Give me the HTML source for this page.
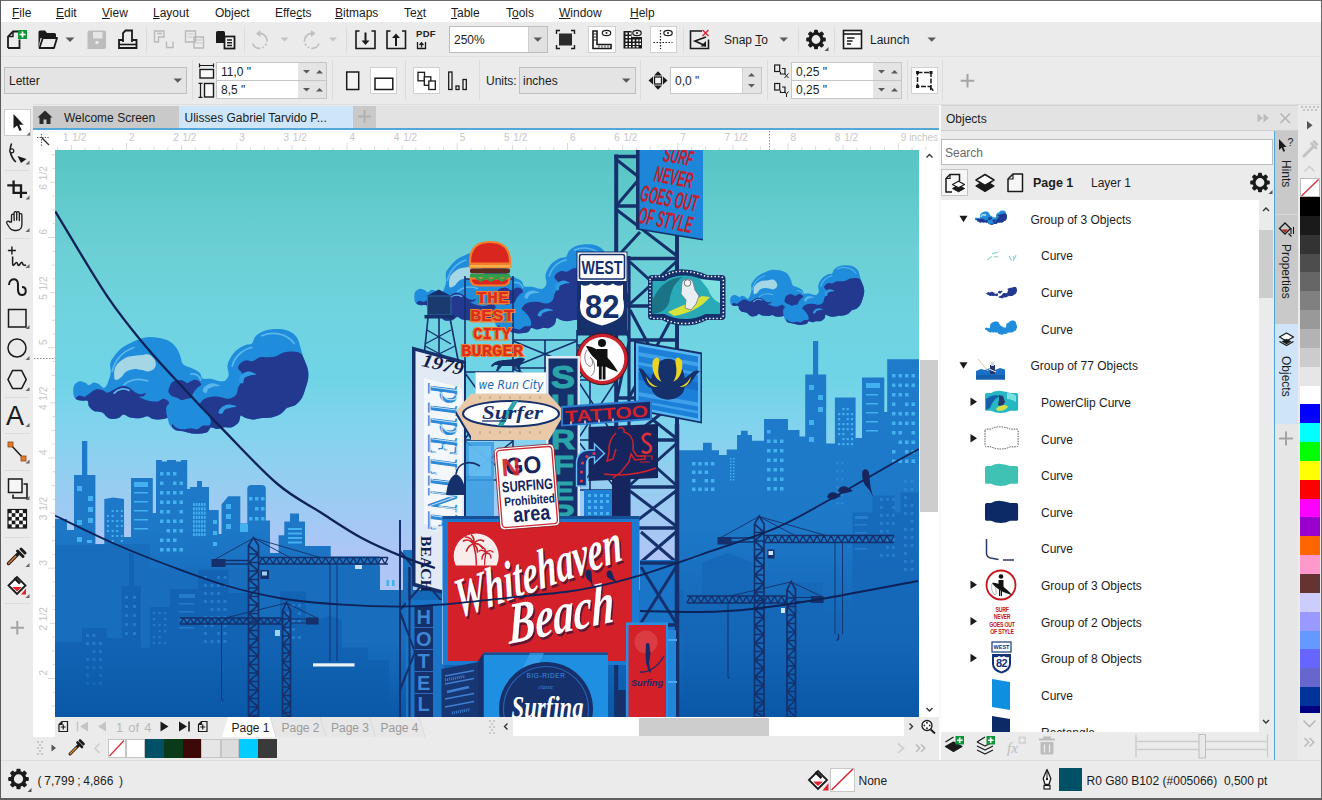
<!DOCTYPE html>
<html lang="en">
<head>
<meta charset="utf-8">
<title>CorelDRAW - Ulisses Gabriel Tarvido</title>
<style>
*{box-sizing:border-box;margin:0;padding:0}
html,body{width:1322px;height:800px;overflow:hidden;background:#ebebeb}
body{font-family:"Liberation Sans",sans-serif;font-size:13px;color:#1a1a1a;position:relative}
.a{position:absolute}
.t{position:absolute;white-space:nowrap;line-height:16px;font-size:12px;color:#1c1c1c}
.g{color:#a9a9a9}
u{text-decoration-thickness:1px;text-underline-offset:1px}
#menubar{left:1px;top:1px;width:1320px;height:21px;background:#fff}
#tb1{left:1px;top:22px;width:1320px;height:34px;background:#ebebeb}
#tb2{left:1px;top:56px;width:1320px;height:48px;background:#ebebeb}
#tabstrip{left:33px;top:106px;width:906px;height:22px;background:#e3e3e3}
#toolbox{left:1px;top:104px;width:32px;height:656px;background:#ebebeb}
.sep{position:absolute;width:1px;background:#dcdcdc}
.hsep{position:absolute;height:1px;background:#dcdcdc}
.inp{position:absolute;background:#fff;border:1px solid #c6c6c6}
.cmb{position:absolute;background:#e4e4e4;border:1px solid #c0c0c0}
.btnw{position:absolute;background:#fff;border:1px solid #d0d0d0}
svg{position:absolute;overflow:visible}
.row{position:absolute;left:0;width:316px;height:36px}
</style>
</head>
<body>
<!-- MENU BAR -->
<div id="menubar" class="a"></div>
<div class="t" style="left:12px;top:4.500px"><u>F</u>ile</div>
<div class="t" style="left:56px;top:4.500px"><u>E</u>dit</div>
<div class="t" style="left:102px;top:4.500px"><u>V</u>iew</div>
<div class="t" style="left:153px;top:4.500px"><u>L</u>ayout</div>
<div class="t" style="left:215px;top:4.500px">Ob<u>j</u>ect</div>
<div class="t" style="left:275px;top:4.500px">Effe<u>c</u>ts</div>
<div class="t" style="left:335px;top:4.500px"><u>B</u>itmaps</div>
<div class="t" style="left:404px;top:4.500px">Te<u>x</u>t</div>
<div class="t" style="left:451px;top:4.500px"><u>T</u>able</div>
<div class="t" style="left:506px;top:4.500px">T<u>o</u>ols</div>
<div class="t" style="left:559px;top:4.500px"><u>W</u>indow</div>
<div class="t" style="left:630px;top:4.500px"><u>H</u>elp</div>
<!-- TOOLBAR 1 -->
<div id="tb1" class="a"></div>
<div id="tb2" class="a"></div>
<div class="hsep" style="left:1px;top:56px;width:1320px;background:#e2e2e2"></div>
<div class="hsep" style="left:1px;top:104px;width:1320px;background:#dedede"></div>
<!-- TOOLBAR 1 widgets -->
<div class="sep" style="left:146px;top:27px;height:26px"></div>
<div class="sep" style="left:244px;top:27px;height:26px"></div>
<div class="sep" style="left:346px;top:27px;height:26px"></div>
<div class="sep" style="left:683px;top:27px;height:26px"></div>
<div class="sep" style="left:798px;top:27px;height:26px"></div>
<div class="sep" style="left:834px;top:27px;height:26px"></div>
<div class="inp" style="left:449px;top:26px;width:99px;height:27px;border-color:#bdbdbd"></div>
<div class="a" style="left:528px;top:27px;width:19px;height:25px;background:#e1e1e1;border-left:1px solid #cfcfcf"></div>
<div class="t" style="left:454px;top:32px">250%</div>
<div class="btnw" style="left:588px;top:26px;width:28px;height:27px"></div>
<div class="btnw" style="left:650px;top:26px;width:27px;height:27px"></div>
<div class="t" style="left:724px;top:32px">Snap <u>T</u>o</div>
<div class="t" style="left:870px;top:32px">Launch</div>
<div class="t" style="left:416px;top:28px;font-size:9.5px;font-weight:bold;line-height:12px;letter-spacing:0.3px;color:#222">PDF</div>
<svg class="a" style="left:0;top:0" width="1322" height="60" viewBox="0 0 1322 60">
 <!-- new doc -->
 <path d="M8 48V36.5l5-5h5.5M19.5 39.5V48H8" fill="none" stroke="#1a1a1a" stroke-width="1.8"/>
 <path d="M8.5 36.5h4.5v-4.5" fill="none" stroke="#1a1a1a" stroke-width="1.4"/>
 <rect x="18" y="30" width="9" height="9" fill="#0f9438"/>
 <path d="M22.5 31.5v6M19.5 34.5h6" stroke="#fff" stroke-width="1.7"/>
 <!-- open folder -->
 <path d="M38.5 48V32q0-1.5 1.5-1.5h5l2 2.5h7.500q1.500 0 1.500 1.500v3.500h-15.500z" fill="#1a1a1a"/>
 <path d="M39.5 48l3.300-10h14.200l-3 10z" fill="#ebebeb" stroke="#1a1a1a" stroke-width="1.8" stroke-linejoin="round"/>
 <path d="M65.500 37.500h9l-4.500 4.500z" fill="#5a5a5a"/>
 <!-- save (disabled) -->
 <path d="M87.500 32.500q0-2 2-2h14.500q2 0 2 2v14.500q0 2-2 2h-16.500z" fill="#bdbdbd"/>
 <rect x="93" y="32" width="9.500" height="6.500" fill="#e6e6e6"/>
 <rect x="95.500" y="41" width="3" height="3" fill="#ececec"/>
 <!-- print -->
 <path d="M123 42V33l2.500-2.500h6.500V42" fill="none" stroke="#1a1a1a" stroke-width="1.800"/>
 <path d="M123 40h-4v8h17.500v-8h-4" fill="none" stroke="#1a1a1a" stroke-width="1.800"/>
 <path d="M119 44.500h17.500" stroke="#1a1a1a" stroke-width="1.600"/>
 <!-- cut/copy disabled -->
 <path d="M154.500 31h9.500v6h-5.500v5h-4zM157 33.500h5" fill="none" stroke="#b9b9b9" stroke-width="1.400"/>
 <path d="M166.500 41.500v6h6.500v-6" fill="none" stroke="#b9b9b9" stroke-width="1.400"/>
 <path d="M185.500 31h10v11h-10zM194 37h9.500v11h-9.500z" fill="#ebebeb" stroke="#b9b9b9" stroke-width="1.400"/>
 <path d="M187.500 34h6M187.500 37h5M196 40h6M196 43h6" stroke="#c6c6c6" stroke-width="1.200"/>
 <!-- paste -->
 <path d="M216 32.500q0-1.500 1.500-1.500h6q1.500 0 1.500 1.500v10.500h-9z" fill="#1a1a1a"/>
 <rect x="224.500" y="36.500" width="10" height="12" fill="#f5f5f5" stroke="#1a1a1a" stroke-width="1.800"/>
 <path d="M227 40h5M227 42.800h5M227 45.600h5" stroke="#1a1a1a" stroke-width="1.500"/>
 <!-- undo / redo disabled -->
 <path d="M258 33.500a7.500 7.500 0 1 1 -5.500 10" fill="none" stroke="#bfbfbf" stroke-width="1.600" stroke-dasharray="14 2 2 2 2 2 20"/>
 <path d="M256 33.500l4.500-3.500v7z" fill="#bfbfbf"/>
 <path d="M280.500 37.500h8l-4 4z" fill="#c4c4c4"/>
 <path d="M313.500 33.500a7.500 7.500 0 1 0 5.500 10" fill="none" stroke="#bfbfbf" stroke-width="1.600" stroke-dasharray="14 2 2 2 2 2 20"/>
 <path d="M315.500 33.500l-4.500-3.500v7z" fill="#bfbfbf"/>
 <path d="M329 37.500h8l-4 4z" fill="#c4c4c4"/>
 <!-- import / export -->
 <path d="M359.500 31h-3.500v17.500h19v-17.500h-3.500" fill="none" stroke="#1a1a1a" stroke-width="1.600"/>
 <path d="M365.500 32.500v10" stroke="#1a1a1a" stroke-width="2"/><path d="M361.500 40.500h8l-4 4.500z" fill="#1a1a1a"/>
 <path d="M390.500 31h-3.500v17.500h18.500v-17.500h-3.500" fill="none" stroke="#1a1a1a" stroke-width="1.600"/>
 <path d="M396 46v-10" stroke="#1a1a1a" stroke-width="2"/><path d="M392 38h8l-4-4.500z" fill="#1a1a1a"/>
 <!-- pdf small icon -->
 <path d="M417.500 42v6.500h8v-6.500" fill="none" stroke="#1a1a1a" stroke-width="1.300"/><path d="M421.500 47.500v-4M419.500 45l2-2.200 2 2.200" fill="none" stroke="#1a1a1a" stroke-width="1.300"/>
 <!-- zoom arrow -->
 <path d="M533.500 37.500h8.500l-4.250 4.300z" fill="#5a5a5a"/>
 <!-- full screen -->
 <rect x="559" y="33.500" width="13" height="12" fill="#2b2b2b"/>
 <path d="M556.500 34v-3.500h3.500M571 30.500h3.500v3.500M574.500 45v3.500h-3.500M560 48.500h-3.500v-3.500" fill="none" stroke="#1a1a1a" stroke-width="1.400"/>
 <!-- rulers -->
 <path d="M593 31h4v13.500h14v4h-18z" fill="#fff" stroke="#1a1a1a" stroke-width="1.600"/>
 <path d="M594 34h2M594 37h2M594 40h2M599 47.500v-2M602 47.500v-2M605 47.500v-2M608 47.500v-2" stroke="#1a1a1a" stroke-width="1"/>
 <ellipse cx="606.500" cy="33" rx="4.200" ry="2.600" fill="#fff" stroke="#1a1a1a" stroke-width="1.200"/><circle cx="606.500" cy="33" r="1" fill="#1a1a1a"/>
 <!-- grid -->
 <path d="M623.500 31h8v6h10.500v11.500h-18.500z" fill="#1a1a1a"/>
 <g fill="#fff"><rect x="625.500" y="32.500" width="2" height="2"/><rect x="629" y="32.500" width="2" height="2"/><rect x="625.500" y="36" width="2" height="2"/><rect x="629" y="36" width="2" height="2"/>
 <rect x="625.500" y="39.500" width="2" height="2"/><rect x="629" y="39.500" width="2" height="2"/><rect x="632.700" y="39.500" width="2" height="2"/><rect x="636.400" y="39.500" width="2" height="2"/><rect x="639.500" y="39.500" width="1.500" height="2"/>
 <rect x="625.500" y="43" width="2" height="2"/><rect x="629" y="43" width="2" height="2"/><rect x="632.700" y="43" width="2" height="2"/><rect x="636.400" y="43" width="2" height="2"/><rect x="639.500" y="43" width="1.500" height="2"/>
 <rect x="625.500" y="46" width="2" height="1.500"/><rect x="629" y="46" width="2" height="1.500"/><rect x="632.700" y="46" width="2" height="1.500"/><rect x="636.400" y="46" width="2" height="1.500"/></g>
 <ellipse cx="637" cy="33" rx="4.200" ry="2.600" fill="#ebebeb" stroke="#1a1a1a" stroke-width="1.200"/><circle cx="637" cy="33" r="1" fill="#1a1a1a"/>
 <!-- guidelines -->
 <path d="M660.500 30v19M653.500 42.500h19" stroke="#1a1a1a" stroke-width="1.200" stroke-dasharray="1.500 1.500"/>
 <ellipse cx="668" cy="33" rx="4.200" ry="2.600" fill="#fff" stroke="#1a1a1a" stroke-width="1.200"/><circle cx="668" cy="33" r="1" fill="#1a1a1a"/>
 <!-- snap off -->
 <path d="M702 31h-11.500v17.500h18v-9" fill="none" stroke="#1a1a1a" stroke-width="1.600"/>
 <path d="M706 46l-11-5 11-4" fill="none" stroke="#1a1a1a" stroke-width="1.700"/><path d="M706 41v5.500h-5.500z" fill="#1a1a1a"/>
 <path d="M702.500 30l6 6M708.500 30l-6 6" stroke="#e0232e" stroke-width="1.400"/>
 <path d="M779.500 37.500h8.500l-4.250 4.300z" fill="#5a5a5a"/>
 <!-- gear -->
 <g transform="translate(816 39.500)"><circle r="6" fill="none" stroke="#1a1a1a" stroke-width="3.200"/>
 <g fill="#1a1a1a"><rect x="-2" y="-9.800" width="4" height="4" rx="1"/><rect x="-2" y="5.800" width="4" height="4" rx="1"/><rect x="-9.800" y="-2" width="4" height="4" rx="1"/><rect x="5.800" y="-2" width="4" height="4" rx="1"/>
 <g transform="rotate(45)"><rect x="-2" y="-9.800" width="4" height="4" rx="1"/><rect x="-2" y="5.800" width="4" height="4" rx="1"/><rect x="-9.800" y="-2" width="4" height="4" rx="1"/><rect x="5.800" y="-2" width="4" height="4" rx="1"/></g></g></g>
 <path d="M828.500 47v4h-4z" fill="#555"/>
 <!-- launch -->
 <rect x="843.500" y="30.500" width="18" height="18" fill="#fafafa" stroke="#1a1a1a" stroke-width="1.600"/>
 <path d="M843.500 34h18" stroke="#1a1a1a" stroke-width="1.600"/>
 <path d="M847 38h7.500M847 41h5.500M847 44h4" stroke="#1a1a1a" stroke-width="1.300"/>
 <path d="M927.500 37.500h8.500l-4.250 4.300z" fill="#5a5a5a"/>
</svg>
<!-- PROPERTY BAR widgets -->
<div class="sep" style="left:192px;top:60px;height:40px"></div>
<div class="sep" style="left:332px;top:60px;height:40px"></div>
<div class="sep" style="left:405px;top:60px;height:40px"></div>
<div class="sep" style="left:479px;top:60px;height:40px"></div>
<div class="sep" style="left:640px;top:60px;height:40px"></div>
<div class="sep" style="left:767px;top:60px;height:40px"></div>
<div class="sep" style="left:907px;top:60px;height:40px"></div>
<div class="sep" style="left:942px;top:60px;height:40px"></div>
<div class="cmb" style="left:4px;top:67px;width:183px;height:27px"></div>
<div class="t" style="left:9px;top:73px">Letter</div>
<div class="inp" style="left:216px;top:62px;width:111px;height:19px"></div>
<div class="inp" style="left:216px;top:80px;width:111px;height:19px"></div>
<div class="a" style="left:298px;top:63px;width:28px;height:17px;background:#e4e4e4"></div>
<div class="a" style="left:298px;top:81px;width:28px;height:17px;background:#e4e4e4"></div>
<div class="t" style="left:221px;top:64px">11,0 "</div>
<div class="t" style="left:221px;top:82px">8,5 "</div>
<div class="btnw" style="left:370px;top:67px;width:27px;height:27px"></div>
<div class="btnw" style="left:413px;top:67px;width:27px;height:27px"></div>
<div class="t" style="left:486px;top:73px">Units:</div>
<div class="cmb" style="left:519px;top:67px;width:117px;height:27px"></div>
<div class="t" style="left:523px;top:73px">inches</div>
<div class="inp" style="left:670px;top:67px;width:92px;height:27px"></div>
<div class="a" style="left:742px;top:68px;width:19px;height:25px;background:#e4e4e4;border-left:1px solid #d0d0d0"></div>
<div class="t" style="left:675px;top:73px">0,0 "</div>
<div class="inp" style="left:791px;top:62px;width:111px;height:19px"></div>
<div class="inp" style="left:791px;top:80px;width:111px;height:19px"></div>
<div class="a" style="left:873px;top:63px;width:28px;height:17px;background:#e4e4e4"></div>
<div class="a" style="left:873px;top:81px;width:28px;height:17px;background:#e4e4e4"></div>
<div class="t" style="left:796px;top:64px">0,25 "</div>
<div class="t" style="left:796px;top:82px">0,25 "</div>
<div class="btnw" style="left:911px;top:67px;width:27px;height:27px"></div>
<svg class="a" style="left:0;top:0" width="1322" height="110" viewBox="0 0 1322 110">
 <path d="M173.500 78.500h8.500l-4.250 4.300z" fill="#5a5a5a"/>
 <!-- width/height icons -->
 <path d="M199.500 65.500h14M199.500 63.500v4M213.500 63.500v4" stroke="#1a1a1a" stroke-width="1.200"/>
 <rect x="200" y="69.500" width="13.500" height="8.500" fill="#fafafa" stroke="#1a1a1a" stroke-width="1.400"/>
 <path d="M200.500 83v14.500M198.500 83.300h4M198.500 97.300h4" stroke="#1a1a1a" stroke-width="1.200"/>
 <rect x="204.500" y="83.500" width="9" height="13.500" fill="#fafafa" stroke="#1a1a1a" stroke-width="1.400"/>
 <g fill="#5a5a5a"><path d="M303 70h7l-3.500 3.500z"/><path d="M316 73.500h7l-3.500-3.500z"/><path d="M303 88h7l-3.500 3.500z"/><path d="M316 91.500h7l-3.500-3.500z"/>
 <path d="M878 70h7l-3.500 3.500z"/><path d="M891 73.500h7l-3.500-3.500z"/><path d="M878 88h7l-3.500 3.500z"/><path d="M891 91.500h7l-3.500-3.500z"/>
 <path d="M748 76.500h7l-3.500-3.500z"/><path d="M748 84h7l-3.500 3.500z"/></g>
 <!-- portrait / landscape -->
 <rect x="346.700" y="72" width="12" height="17.500" fill="#f4f4f4" stroke="#1a1a1a" stroke-width="1.500"/>
 <rect x="375" y="78.200" width="17.800" height="11.300" fill="#fff" stroke="#1a1a1a" stroke-width="1.500"/>
 <!-- all pages -->
 <rect x="418" y="72.300" width="6.500" height="8.500" fill="#fff" stroke="#1a1a1a" stroke-width="1.300"/>
 <rect x="424.300" y="76.800" width="6.500" height="8.500" fill="#fff" stroke="#1a1a1a" stroke-width="1.300"/>
 <rect x="428.800" y="81" width="6.500" height="8.500" fill="#fff" stroke="#1a1a1a" stroke-width="1.300"/>
 <rect x="448.700" y="72" width="3.300" height="17.500" fill="#f4f4f4" stroke="#1a1a1a" stroke-width="1.300"/>
 <rect x="456" y="86" width="3" height="3.500" fill="#f4f4f4" stroke="#1a1a1a" stroke-width="1.300"/>
 <rect x="463" y="79.500" width="3.300" height="10" fill="#f4f4f4" stroke="#1a1a1a" stroke-width="1.300"/>
 <path d="M622 78.500h8.500l-4.250 4.300z" fill="#5a5a5a"/>
 <!-- nudge icon -->
 <rect x="654.500" y="77" width="7" height="7" fill="#f4f4f4" stroke="#1a1a1a" stroke-width="1.300"/>
 <g fill="#1a1a1a"><path d="M654 75.500h8l-4-4.300z"/><path d="M654 85.500h8l-4 4.300z"/><path d="M653 76.500v8l-4.500-4z"/><path d="M663 76.500v8l4.500-4z"/></g>
 <!-- duplicate distance icons -->
 <g fill="none" stroke="#1a1a1a" stroke-width="1.200"><rect x="774.700" y="65" width="5" height="6.500"/><path d="M782 68.500h3v5.500h-4.500v-2"/>
 <rect x="774.700" y="83.500" width="5" height="6.500"/><path d="M782 87h3v5.500h-4.500v-2"/></g>
 <path d="M784.500 73.500l4 4.500M788.500 73.500l-4 4.500" stroke="#1a1a1a" stroke-width="1"/>
 <path d="M784.500 91.500l2 2.500 2-2.500M786.500 94v3" fill="none" stroke="#1a1a1a" stroke-width="1"/>
 <!-- bleed button -->
 <rect x="917.500" y="72.500" width="13.500" height="14" fill="none" stroke="#1a1a1a" stroke-width="1.500" stroke-dasharray="5 1.500"/>
 <g fill="#1a1a1a"><rect x="916" y="71" width="3" height="3"/><rect x="929.500" y="71" width="3" height="3"/><rect x="916" y="85" width="3" height="3"/><path d="M930 85l4 5.500-1.500 0.500-1-1.500-1.500 1z"/></g>
 <path d="M967.500 74v13.500M960.700 80.700h13.500" stroke="#a4a4a4" stroke-width="2"/>
</svg>
<!-- TAB STRIP -->
<div id="tabstrip" class="a"></div>
<div class="a" style="left:33px;top:106px;width:146px;height:22px;background:#c9c9c9"></div>
<div class="a" style="left:179px;top:106px;width:174px;height:22px;background:#cfe5f8"></div>
<div class="a" style="left:353px;top:106px;width:23px;height:22px;background:#c9c9c9"></div>
<div class="t" style="left:64px;top:110px">Welcome Screen</div>
<div class="t" style="left:184.500px;top:110px">Ulisses Gabriel Tarvido P...</div>
<div class="a" style="left:33px;top:128px;width:906px;height:2px;background:#55a7da"></div>
<!-- RULERS -->
<div class="a" style="left:33px;top:130px;width:906px;height:20px;background:#fff"></div>
<div class="a" style="left:33px;top:150px;width:22px;height:567px;background:#fff"></div>
<!-- TOOLBOX -->
<div id="toolbox" class="a"></div>
<div class="btnw" style="left:4px;top:109px;width:27px;height:27px;border-color:#cfcfcf"></div>
<div class="hsep" style="left:4px;top:170px;width:26px"></div>
<div class="hsep" style="left:4px;top:238px;width:26px"></div>
<div class="hsep" style="left:4px;top:397px;width:26px"></div>
<div class="hsep" style="left:4px;top:433px;width:26px"></div>
<div class="hsep" style="left:4px;top:470px;width:26px"></div>
<div class="hsep" style="left:4px;top:537px;width:26px"></div>
<div class="hsep" style="left:4px;top:603px;width:26px"></div>
<svg class="a" style="left:0;top:0" width="400" height="700" viewBox="0 0 400 700">
 <!-- home -->
 <path d="M37.500 117.500l7.500-7 7.500 7h-2v6.500h-4v-4.500h-3v4.500h-4v-6.500z" fill="#2a2a2a"/>
 <path d="M364.500 110v13M358 116.500h13" stroke="#b0b0b0" stroke-width="1.800"/>
 <!-- ruler origin -->
 <path d="M41.500 134v12M37 137.500h13" stroke="#555" stroke-width="1.200" stroke-dasharray="1.300 1.300"/>
 <path d="M42 138l7 7" stroke="#333" stroke-width="1.400"/>
 <!-- pick -->
 <path d="M13.500 114v14.500l3.500-3 2.500 5.500 2.200-1-2.500-5.300h4.300z" fill="#1a1a1a"/>
 <path d="M30 132v3.500h-3.500z" fill="#666"/>
 <!-- shape -->
 <path d="M11.600 143.500c-2 4.500-2 9.500 1 14.500q1.500 2.500 3.300 4" fill="none" stroke="#1a1a1a" stroke-width="1.600"/>
 <circle cx="11.800" cy="150.800" r="2" fill="#ebebeb" stroke="#1a1a1a" stroke-width="1.200"/>
 <path d="M17.500 156l9 3-5.500 4z" fill="#1a1a1a"/>
 <path d="M29.500 160.500v4h-4z" fill="#666"/>
 <!-- crop -->
 <path d="M13.600 180.500v12.300h13.400M7.300 185.400h13.700v12.600" fill="none" stroke="#1a1a1a" stroke-width="2.300"/>
 <path d="M29.500 195.500v4h-4z" fill="#666"/>
 <!-- pan hand -->
 <path d="M11.500 222v-6.500q0-1.300 1.300-1.300t1.300 1.300v5-7.500q0-1.300 1.300-1.300t1.300 1.300v7-7q0-1.300 1.300-1.300t1.300 1.300v7.500-5.500q0-1.300 1.300-1.300t1.300 1.300v9.500q0 6-6 6h-1.500q-3 0-5-3l-2.500-4q-.8-1.500.5-2.200t2.300.7z" fill="none" stroke="#1a1a1a" stroke-width="1.300" stroke-linejoin="round"/>
 <path d="M29.500 228v4h-4z" fill="#666"/>
 <!-- freehand -->
 <path d="M11.900 246.500v8M7.900 250.500h8" stroke="#1a1a1a" stroke-width="1.400"/>
 <path d="M12.600 256.500v7q0 3.500 2.200 .5t2.800 0 2.500 0 2.500-.5 3.500 1.500" fill="none" stroke="#1a1a1a" stroke-width="1.500"/>
 <path d="M29.500 264v4h-4z" fill="#666"/>
 <!-- artistic media -->
 <path d="M9 285c0-7 9-8 9-1 0 4-1 11 4 11s5-8 0-8" fill="none" stroke="#1a1a1a" stroke-width="2"/>
 <!-- rectangle -->
 <rect x="8.500" y="309.500" width="17.500" height="17.500" fill="none" stroke="#1a1a1a" stroke-width="1.500"/>
 <path d="M29.500 325v4h-4z" fill="#666"/>
 <!-- ellipse -->
 <circle cx="17" cy="348" r="9" fill="none" stroke="#1a1a1a" stroke-width="1.500"/>
 <path d="M29.500 356v4h-4z" fill="#666"/>
 <!-- polygon -->
 <path d="M8 379.500l4.600-9h9l4.600 9-4.600 9h-9z" fill="none" stroke="#1a1a1a" stroke-width="1.600"/>
 <path d="M29.500 387v4h-4z" fill="#666"/>
 <!-- dimension/connector -->
 <path d="M10.500 444.500l13 14" stroke="#1a1a1a" stroke-width="1.500"/>
 <rect x="8" y="442" width="5" height="5" fill="#e8782a" stroke="#8a4a18" stroke-width=".8"/>
 <rect x="21" y="456" width="5" height="5" fill="#e8782a" stroke="#8a4a18" stroke-width=".8"/>
 <path d="M29.500 459.500v4h-4z" fill="#666"/>
 <!-- drop shadow -->
 <path d="M13 494.500v3.500h14v-14h-3.500" fill="none" stroke="#1a1a1a" stroke-width="1.600"/>
 <rect x="8.500" y="479" width="13.500" height="13.500" fill="#f6f6f6" stroke="#1a1a1a" stroke-width="1.500"/>
 <path d="M29.500 496v4h-4z" fill="#666"/>
 <!-- transparency checker -->
 <rect x="8" y="509.500" width="18.500" height="18.500" fill="#fff" stroke="#1a1a1a" stroke-width="1.200"/>
 <g fill="#1a1a1a"><rect x="8" y="509.500" width="3.700" height="3.700"/><rect x="15.400" y="509.500" width="3.700" height="3.700"/><rect x="22.800" y="509.500" width="3.700" height="3.700"/>
 <rect x="11.700" y="513.200" width="3.700" height="3.700"/><rect x="19.100" y="513.200" width="3.700" height="3.700"/>
 <rect x="8" y="516.900" width="3.700" height="3.700"/><rect x="15.400" y="516.900" width="3.700" height="3.700"/><rect x="22.800" y="516.900" width="3.700" height="3.700"/>
 <rect x="11.700" y="520.600" width="3.700" height="3.700"/><rect x="19.100" y="520.600" width="3.700" height="3.700"/>
 <rect x="8" y="524.300" width="3.700" height="3.700"/><rect x="15.400" y="524.300" width="3.700" height="3.700"/><rect x="22.800" y="524.300" width="3.700" height="3.700"/></g>
 <!-- eyedropper -->
 <path d="M8.500 563.500l10-10" stroke="#1a1a1a" stroke-width="3.400" stroke-linecap="round"/>
 <path d="M8.700 563.300l7-7" stroke="#e8782a" stroke-width="1.600" stroke-linecap="round"/>
 <path d="M17.500 551l5.500 5.500M21 549l4 4" stroke="#1a1a1a" stroke-width="3" stroke-linecap="round"/>
 <path d="M29.500 563v4h-4z" fill="#666"/>
 <!-- fill -->
 <path d="M8.500 585.500l8.500-8.500 8.500 8.500-8.500 8.500z" fill="#fff" stroke="#1a1a1a" stroke-width="1.800"/>
 <path d="M12 587h10l-5 4.500z" fill="#e0232e"/>
 <path d="M14.500 578l5.500 5.500" stroke="#1a1a1a" stroke-width="2.500"/>
 <path d="M26 588.500v6h-5z" fill="#e0232e"/>
 <path d="M29.500 594v4h-4z" fill="#666"/>
 <path d="M17.300 621v13.500M10.500 627.700h13.500" stroke="#a4a4a4" stroke-width="2"/>
</svg>
<div class="t" style="left:6px;top:402px;font-size:27px;line-height:28px;letter-spacing:0">A</div>
<svg class="a" style="left:0;top:0" width="60" height="700" viewBox="0 0 60 700"><path d="M29.500 423v4h-4z" fill="#666"/></svg>
<!-- ARTWORK -->
<svg class="a" style="left:55px;top:150px;overflow:hidden" width="864" height="567" viewBox="55 150 864 567">
<defs>
<linearGradient id="sky" x1="0" y1="150" x2="0" y2="717" gradientUnits="userSpaceOnUse">
<stop offset="0" stop-color="#56c5c3"/><stop offset=".17" stop-color="#6bcfd4"/><stop offset=".30" stop-color="#70d3e0"/><stop offset=".40" stop-color="#6fd4e6"/><stop offset=".50" stop-color="#84d3ee"/><stop offset=".62" stop-color="#9ccbf2"/><stop offset=".72" stop-color="#afc5f6"/><stop offset="1" stop-color="#afc5f6"/>
</linearGradient>
<linearGradient id="city" x1="0" y1="340" x2="0" y2="717" gradientUnits="userSpaceOnUse">
<stop offset="0" stop-color="#1f7ccb"/><stop offset=".5" stop-color="#1d78c8"/><stop offset=".66" stop-color="#186dbd"/><stop offset=".84" stop-color="#1061b1"/><stop offset="1" stop-color="#0a58a8"/>
</linearGradient>
<g id="cloud"><g transform="scale(.19666) translate(-40 -50)"><path id="cl-outer" d="M42 370C41 358 42 340 48 330C54 320 66 314 75 312C84 310 97 317 105 320C113 323 115 332 122 332C129 332 137 319 145 318C153 317 164 322 172 326C180 330 188 345 195 345C202 345 209 338 215 325C221 312 230 288 232 270C234 252 227 234 230 220C233 206 241 198 250 185C259 172 272 156 285 145C298 134 313 126 330 118C347 110 368 100 385 95C402 90 414 86 430 86C446 86 463 88 480 92C497 96 516 100 530 108C544 116 556 128 565 140C574 152 579 166 585 180C591 194 590 214 600 225C610 236 631 238 645 245C659 252 676 259 685 268C694 277 690 293 700 298C710 303 730 298 745 300C760 302 778 311 790 312C802 313 808 313 815 308C822 303 830 292 832 280C834 268 825 249 826 235C827 221 833 208 840 195C847 182 858 166 870 155C882 144 902 134 915 128C928 122 941 128 950 120C959 112 959 93 970 82C981 71 998 61 1015 55C1032 49 1055 46 1075 46C1095 46 1118 48 1135 55C1152 62 1169 74 1180 90C1191 106 1194 132 1200 150C1206 168 1209 183 1215 200C1221 217 1232 233 1235 250C1238 267 1238 283 1236 300C1234 317 1227 334 1222 350C1217 366 1213 381 1205 395C1197 409 1184 423 1172 432C1160 441 1142 440 1130 447C1118 454 1111 469 1098 477C1085 485 1066 492 1050 496C1034 500 1016 497 1000 499C984 501 969 506 955 506C941 506 925 500 915 497C905 494 898 483 893 487C888 491 890 512 882 522C874 532 860 542 848 546C836 550 820 544 808 546C796 548 786 555 775 555C764 555 751 544 742 547C733 550 734 567 720 572C706 577 680 580 660 579C640 578 617 570 600 566C583 562 570 564 558 558C546 552 536 540 530 530C524 520 528 501 520 497C512 493 493 505 480 506C467 507 450 504 440 501C430 498 428 490 418 490C408 490 395 499 380 500C365 501 344 499 330 496C316 493 308 480 298 481C288 482 281 497 268 500C255 503 235 505 222 500C209 495 202 477 190 471C178 465 161 469 150 464C139 459 128 449 122 440C116 431 121 416 114 411C107 406 90 412 80 410C70 408 58 407 52 400C46 393 43 382 42 370Z" fill="#1f8ddb"/><g id="cl-dark"><path d="M55 400C54 396 64 386 72 384C80 382 91 392 100 390C109 388 119 378 128 372C137 366 145 357 155 354C165 351 180 353 190 356C200 359 207 370 216 370C225 370 233 362 242 358C251 354 259 348 268 344C277 340 286 336 295 336C304 336 314 339 322 342C330 345 335 351 342 356C349 361 356 368 364 372C372 376 380 378 388 378C396 378 410 370 412 372C414 374 404 385 398 388C392 391 374 388 378 392C382 396 405 406 420 410C435 414 457 416 470 414C483 412 491 400 500 400C509 400 519 407 524 412C529 417 531 425 530 432C529 439 522 448 520 455C518 462 516 468 516 475C516 482 526 492 520 497C514 502 493 505 480 506C467 507 450 504 440 501C430 498 428 490 418 490C408 490 395 499 380 500C365 501 344 499 330 496C316 493 308 480 298 481C288 482 281 497 268 500C255 503 235 505 222 500C209 495 202 477 190 471C178 465 161 469 150 464C139 459 128 449 122 440C116 431 121 416 114 411C107 406 90 412 80 410C70 408 56 404 55 400Z" fill="#23398f"/><path d="M530 345C533 337 536 323 546 316C556 309 577 304 590 305C603 306 612 320 622 320C632 320 642 307 652 305C662 303 673 306 680 310C687 314 693 324 692 330C691 336 679 339 672 346C665 353 657 364 652 372C647 380 649 390 640 396C631 402 612 410 600 410C588 410 580 400 570 396C560 392 549 390 542 385C535 380 528 373 526 366C524 359 527 353 530 345Z" fill="#23398f"/><path d="M880 245C879 237 885 227 892 220C899 213 912 207 922 205C932 203 940 212 952 210C964 208 977 193 992 190C1007 187 1027 191 1040 190C1053 189 1060 189 1072 185C1084 181 1097 169 1112 165C1127 161 1145 159 1160 160C1175 161 1190 163 1200 172C1210 181 1216 200 1222 215C1228 230 1234 246 1236 260C1238 274 1238 285 1236 300C1234 315 1227 334 1222 350C1217 366 1213 381 1205 395C1197 409 1184 423 1172 432C1160 441 1142 440 1130 447C1118 454 1111 469 1098 477C1085 485 1066 492 1050 496C1034 500 1016 497 1000 499C984 501 969 506 955 506C941 506 925 500 915 497C905 494 898 483 893 487C888 491 890 512 882 522C874 532 860 542 848 546C836 550 820 544 808 546C796 548 786 555 775 555C764 555 751 544 742 547C733 550 734 567 720 572C706 577 680 580 660 579C640 578 617 570 600 566C583 562 567 564 558 558C549 552 538 540 545 530C552 520 581 510 600 500C619 490 645 483 660 470C675 457 680 432 690 420C700 408 707 401 722 396C737 391 762 389 780 390C798 391 817 402 832 400C847 398 862 390 870 380C878 370 876 353 882 340C888 327 903 312 906 300C909 288 904 279 900 270C896 261 881 253 880 245Z" fill="#23398f"/></g><path d="M520 495C518 484 512 458 515 445C518 432 529 425 540 420C551 415 566 417 580 414C594 411 608 401 622 400C636 399 650 403 662 410C674 417 682 430 692 440C702 450 714 461 722 472C730 483 738 498 740 508C742 518 743 529 736 534C729 539 711 534 700 538C689 542 682 554 672 556C662 558 652 550 640 550C628 550 611 557 598 556C585 555 571 550 562 545C553 540 550 530 544 525C538 520 532 517 528 512C524 507 522 506 520 495Z" fill="#1f8ddb"/><path d="M250 290C250 278 248 251 258 235C268 219 288 201 308 192C328 183 360 183 380 180C400 177 413 172 425 175C437 178 446 188 452 196C458 204 462 217 462 226C462 235 457 244 450 250C443 256 430 261 420 262C410 263 402 257 390 255C378 253 363 249 350 250C337 251 322 256 312 262C302 268 296 280 290 286C284 292 280 297 274 300C268 303 260 306 256 304C252 302 250 302 250 290Z" fill="#a4d6e6"/><path d="M780 472C779 467 786 452 795 445C804 438 819 431 832 430C845 429 870 437 872 440C874 443 852 443 842 446C832 449 819 451 812 456C805 461 805 473 800 476C795 479 781 477 780 472Z" fill="#2f9be4"/><path d="M886 312C884 305 885 290 892 282C899 274 917 263 930 262C943 261 970 273 972 276C974 279 952 279 942 282C932 285 918 289 912 296C906 303 909 319 905 322C901 325 888 319 886 312Z" fill="#2f9be4"/><path d="M700 360C700 354 707 341 715 335C723 329 738 322 750 322C762 322 788 332 790 335C792 338 770 336 760 338C750 340 737 344 730 350C723 356 723 370 718 372C713 374 700 366 700 360Z" fill="#5ab6ec"/><path d="M240 262C250 210 290 160 350 140M300 330C330 300 380 295 420 310M850 235C860 190 900 150 950 140M1000 80C1060 55 1130 70 1165 120M640 275C665 270 685 285 690 305M250 372C270 350 300 345 325 358" fill="none" stroke="#5ab6ec" stroke-width="9" stroke-linecap="round"/></g>
</g></defs>
<rect x="55" y="150" width="864" height="567" fill="url(#sky)"/>
<use href="#cloud" transform="translate(72.900 329.800)"/>
<use href="#cloud" transform="translate(730 265.600) scale(.57)"/>
<use href="#cloud" transform="translate(414 245) scale(.85)"/>
<path d="M55 519h12v11h7V475h8V441h5.300V475h8.100V544h8.900V499l9-1.500 10.700 1.500V537h7V478h21.800V513h3.200V460h6v1.500h5V460h9v1.500h5V460h6.200V489h2.800V487h7V481h5V487h7V510h9.700V534h2.800V504.400L228.200 496.300H240.300V523.600H247.300V489q0-4 4-4h10.500q4 0 4 4V520.400H270V553H278.600V535.200H284.300V521.500H290V513.400H299V521.500H305V546H330.700V556.500H379.600V590.500H403V550H413V717H55Z" fill="url(#city)"/>
<path d="M919 359.300H887.200V412H884.300V377.500H862V437.900H855.600V397.600H834.900V443.600H826.200V374.600H818.200V341H813V374.600H805.200V436.400H799.500V430H788V419H764V440.700H752V435H747.700V430.700H741V435H737V449.400H726.700V455H719V450.200H711.800V442.700H703V450.200H676V717H919Z" fill="url(#city)"/>
<rect x="413" y="590" width="270" height="127" fill="#1468b8"/>
<g fill="#43b1ee"><rect x="77.0" y="486.0" width="5" height="5"/><rect x="88.0" y="496.0" width="5" height="5"/><rect x="88.0" y="507.0" width="5" height="5"/><rect x="88.0" y="518.0" width="5" height="5"/><rect x="77.0" y="520.0" width="5" height="5"/><rect x="77.0" y="537.0" width="5" height="5"/><rect x="111.6" y="510.0" width="2" height="2"/><rect x="116.2" y="510.0" width="2" height="2"/><rect x="120.8" y="510.0" width="2" height="2"/><rect x="107.0" y="515.0" width="2" height="2"/><rect x="111.6" y="515.0" width="2" height="2"/><rect x="120.8" y="515.0" width="2" height="2"/><rect x="107.0" y="520.0" width="2" height="2"/><rect x="111.6" y="520.0" width="2" height="2"/><rect x="116.2" y="520.0" width="2" height="2"/><rect x="120.8" y="520.0" width="2" height="2"/><rect x="107.0" y="525.0" width="2" height="2"/><rect x="116.2" y="525.0" width="2" height="2"/><rect x="120.8" y="525.0" width="2" height="2"/><rect x="107.0" y="530.0" width="2" height="2"/><rect x="111.6" y="530.0" width="2" height="2"/><rect x="116.2" y="530.0" width="2" height="2"/><rect x="111.6" y="535.0" width="2" height="2"/><rect x="116.2" y="535.0" width="2" height="2"/><rect x="120.8" y="535.0" width="2" height="2"/><rect x="107.0" y="540.0" width="2" height="2"/><rect x="111.6" y="540.0" width="2" height="2"/><rect x="120.8" y="540.0" width="2" height="2"/><rect x="134.0" y="482.0" width="14" height="5"/><rect x="134.0" y="492.0" width="14" height="1.5"/><rect x="134.0" y="501.0" width="14" height="1.5"/><rect x="134.0" y="510.0" width="14" height="1.5"/><rect x="134.0" y="519.0" width="14" height="1.5"/><rect x="134.0" y="528.0" width="14" height="1.5"/><rect x="160.0" y="472.0" width="3.5" height="3.5"/><rect x="166.5" y="472.0" width="3.5" height="3.5"/><rect x="173.0" y="472.0" width="3.5" height="3.5"/><rect x="160.0" y="481.5" width="3.5" height="3.5"/><rect x="173.0" y="481.5" width="3.5" height="3.5"/><rect x="179.5" y="481.5" width="3.5" height="3.5"/><rect x="160.0" y="491.0" width="3.5" height="3.5"/><rect x="166.5" y="491.0" width="3.5" height="3.5"/><rect x="173.0" y="491.0" width="3.5" height="3.5"/><rect x="179.5" y="491.0" width="3.5" height="3.5"/><rect x="160.0" y="500.5" width="3.5" height="3.5"/><rect x="166.5" y="500.5" width="3.5" height="3.5"/><rect x="173.0" y="500.5" width="3.5" height="3.5"/><rect x="179.5" y="500.5" width="3.5" height="3.5"/><rect x="160.0" y="510.0" width="3.5" height="3.5"/><rect x="166.5" y="510.0" width="3.5" height="3.5"/><rect x="179.5" y="510.0" width="3.5" height="3.5"/><rect x="160.0" y="519.5" width="3.5" height="3.5"/><rect x="166.5" y="519.5" width="3.5" height="3.5"/><rect x="173.0" y="519.5" width="3.5" height="3.5"/><rect x="179.5" y="519.5" width="3.5" height="3.5"/><rect x="166.5" y="529.0" width="3.5" height="3.5"/><rect x="173.0" y="529.0" width="3.5" height="3.5"/><rect x="179.5" y="529.0" width="3.5" height="3.5"/><rect x="160.0" y="538.5" width="3.5" height="3.5"/><rect x="166.5" y="538.5" width="3.5" height="3.5"/><rect x="173.0" y="538.5" width="3.5" height="3.5"/><rect x="160.0" y="548.0" width="3.5" height="3.5"/><rect x="166.5" y="548.0" width="3.5" height="3.5"/><rect x="173.0" y="548.0" width="3.5" height="3.5"/><rect x="179.5" y="548.0" width="3.5" height="3.5"/><rect x="193.0" y="503.0" width="1.8" height="3"/><rect x="195.7" y="503.0" width="1.8" height="3"/><rect x="198.4" y="503.0" width="1.8" height="3"/><rect x="201.1" y="503.0" width="1.8" height="3"/><rect x="203.8" y="503.0" width="1.8" height="3"/><rect x="193.0" y="507.3" width="1.8" height="3"/><rect x="195.7" y="507.3" width="1.8" height="3"/><rect x="198.4" y="507.3" width="1.8" height="3"/><rect x="201.1" y="507.3" width="1.8" height="3"/><rect x="203.8" y="507.3" width="1.8" height="3"/><rect x="193.0" y="511.6" width="1.8" height="3"/><rect x="195.7" y="511.6" width="1.8" height="3"/><rect x="198.4" y="511.6" width="1.8" height="3"/><rect x="201.1" y="511.6" width="1.8" height="3"/><rect x="203.8" y="511.6" width="1.8" height="3"/><rect x="193.0" y="515.9" width="1.8" height="3"/><rect x="195.7" y="515.9" width="1.8" height="3"/><rect x="198.4" y="515.9" width="1.8" height="3"/><rect x="201.1" y="515.9" width="1.8" height="3"/><rect x="203.8" y="515.9" width="1.8" height="3"/><rect x="193.0" y="520.2" width="1.8" height="3"/><rect x="195.7" y="520.2" width="1.8" height="3"/><rect x="198.4" y="520.2" width="1.8" height="3"/><rect x="201.1" y="520.2" width="1.8" height="3"/><rect x="203.8" y="520.2" width="1.8" height="3"/><rect x="193.0" y="524.5" width="1.8" height="3"/><rect x="195.7" y="524.5" width="1.8" height="3"/><rect x="198.4" y="524.5" width="1.8" height="3"/><rect x="201.1" y="524.5" width="1.8" height="3"/><rect x="203.8" y="524.5" width="1.8" height="3"/><rect x="193.0" y="528.8" width="1.8" height="3"/><rect x="195.7" y="528.8" width="1.8" height="3"/><rect x="198.4" y="528.8" width="1.8" height="3"/><rect x="201.1" y="528.8" width="1.8" height="3"/><rect x="203.8" y="528.8" width="1.8" height="3"/><rect x="193.0" y="533.1" width="1.8" height="3"/><rect x="195.7" y="533.1" width="1.8" height="3"/><rect x="198.4" y="533.1" width="1.8" height="3"/><rect x="201.1" y="533.1" width="1.8" height="3"/><rect x="203.8" y="533.1" width="1.8" height="3"/><rect x="213.0" y="520.0" width="4" height="4"/><rect x="213.0" y="531.0" width="4" height="4"/><rect x="213.0" y="542.0" width="4" height="4"/><rect x="226.0" y="504.0" width="5" height="5"/><rect x="226.0" y="514.0" width="5" height="5"/><rect x="226.0" y="524.0" width="5" height="5"/><rect x="240.0" y="524.0" width="8" height="8"/><rect x="249.0" y="497.0" width="3.5" height="3.5"/><rect x="255.0" y="497.0" width="3.5" height="3.5"/><rect x="261.0" y="497.0" width="3.5" height="3.5"/><rect x="255.0" y="507.0" width="3.5" height="3.5"/><rect x="261.0" y="507.0" width="3.5" height="3.5"/><rect x="249.0" y="517.0" width="3.5" height="3.5"/><rect x="255.0" y="517.0" width="3.5" height="3.5"/><rect x="261.0" y="517.0" width="3.5" height="3.5"/><rect x="288.0" y="528.0" width="14" height="2"/><rect x="288.0" y="532.5" width="14" height="2"/><rect x="288.0" y="537.0" width="14" height="2"/><rect x="288.0" y="541.5" width="14" height="2"/><rect x="87.0" y="540.0" width="5" height="3"/><rect x="809.0" y="385.0" width="5" height="5"/><rect x="818.0" y="395.0" width="5" height="5"/><rect x="809.0" y="420.0" width="5" height="5"/><rect x="809.0" y="437.0" width="5" height="5"/><rect x="818.0" y="407.0" width="5" height="5"/><rect x="842.3" y="408.0" width="2.2" height="2.2"/><rect x="846.6" y="408.0" width="2.2" height="2.2"/><rect x="838.0" y="413.0" width="2.2" height="2.2"/><rect x="842.3" y="413.0" width="2.2" height="2.2"/><rect x="846.6" y="413.0" width="2.2" height="2.2"/><rect x="850.9" y="413.0" width="2.2" height="2.2"/><rect x="838.0" y="418.0" width="2.2" height="2.2"/><rect x="846.6" y="418.0" width="2.2" height="2.2"/><rect x="850.9" y="418.0" width="2.2" height="2.2"/><rect x="838.0" y="423.0" width="2.2" height="2.2"/><rect x="842.3" y="423.0" width="2.2" height="2.2"/><rect x="846.6" y="423.0" width="2.2" height="2.2"/><rect x="850.9" y="423.0" width="2.2" height="2.2"/><rect x="838.0" y="428.0" width="2.2" height="2.2"/><rect x="842.3" y="428.0" width="2.2" height="2.2"/><rect x="846.6" y="428.0" width="2.2" height="2.2"/><rect x="850.9" y="428.0" width="2.2" height="2.2"/><rect x="838.0" y="433.0" width="2.2" height="2.2"/><rect x="842.3" y="433.0" width="2.2" height="2.2"/><rect x="850.9" y="433.0" width="2.2" height="2.2"/><rect x="842.3" y="438.0" width="2.2" height="2.2"/><rect x="846.6" y="438.0" width="2.2" height="2.2"/><rect x="850.9" y="438.0" width="2.2" height="2.2"/><rect x="838.0" y="443.0" width="2.2" height="2.2"/><rect x="842.3" y="443.0" width="2.2" height="2.2"/><rect x="846.6" y="443.0" width="2.2" height="2.2"/><rect x="850.9" y="443.0" width="2.2" height="2.2"/><rect x="866.0" y="383.0" width="14" height="5"/><rect x="866.0" y="394.0" width="12" height="1.5"/><rect x="866.0" y="403.0" width="12" height="1.5"/><rect x="866.0" y="412.0" width="12" height="1.5"/><rect x="866.0" y="421.0" width="12" height="1.5"/><rect x="866.0" y="430.0" width="12" height="1.5"/><rect x="892.0" y="374.0" width="3.5" height="3.5"/><rect x="898.5" y="374.0" width="3.5" height="3.5"/><rect x="905.0" y="374.0" width="3.5" height="3.5"/><rect x="911.5" y="374.0" width="3.5" height="3.5"/><rect x="892.0" y="383.5" width="3.5" height="3.5"/><rect x="898.5" y="383.5" width="3.5" height="3.5"/><rect x="905.0" y="383.5" width="3.5" height="3.5"/><rect x="911.5" y="383.5" width="3.5" height="3.5"/><rect x="892.0" y="393.0" width="3.5" height="3.5"/><rect x="898.5" y="393.0" width="3.5" height="3.5"/><rect x="905.0" y="393.0" width="3.5" height="3.5"/><rect x="892.0" y="402.5" width="3.5" height="3.5"/><rect x="905.0" y="402.5" width="3.5" height="3.5"/><rect x="911.5" y="402.5" width="3.5" height="3.5"/><rect x="892.0" y="412.0" width="3.5" height="3.5"/><rect x="898.5" y="412.0" width="3.5" height="3.5"/><rect x="905.0" y="412.0" width="3.5" height="3.5"/><rect x="911.5" y="412.0" width="3.5" height="3.5"/><rect x="892.0" y="421.5" width="3.5" height="3.5"/><rect x="898.5" y="421.5" width="3.5" height="3.5"/><rect x="905.0" y="421.5" width="3.5" height="3.5"/><rect x="911.5" y="421.5" width="3.5" height="3.5"/><rect x="892.0" y="431.0" width="3.5" height="3.5"/><rect x="898.5" y="431.0" width="3.5" height="3.5"/><rect x="911.5" y="431.0" width="3.5" height="3.5"/><rect x="898.5" y="440.5" width="3.5" height="3.5"/><rect x="905.0" y="440.5" width="3.5" height="3.5"/><rect x="911.5" y="440.5" width="3.5" height="3.5"/><rect x="892.0" y="450.0" width="3.5" height="3.5"/><rect x="905.0" y="450.0" width="3.5" height="3.5"/><rect x="911.5" y="450.0" width="3.5" height="3.5"/><rect x="892.0" y="459.5" width="3.5" height="3.5"/><rect x="898.5" y="459.5" width="3.5" height="3.5"/><rect x="905.0" y="459.5" width="3.5" height="3.5"/><rect x="911.5" y="459.5" width="3.5" height="3.5"/><rect x="767.0" y="430.0" width="3.5" height="3.5"/><rect x="767.0" y="439.5" width="3.5" height="3.5"/><rect x="773.5" y="439.5" width="3.5" height="3.5"/><rect x="780.0" y="439.5" width="3.5" height="3.5"/><rect x="767.0" y="449.0" width="3.5" height="3.5"/><rect x="773.5" y="449.0" width="3.5" height="3.5"/><rect x="780.0" y="449.0" width="3.5" height="3.5"/><rect x="767.0" y="458.5" width="3.5" height="3.5"/><rect x="773.5" y="458.5" width="3.5" height="3.5"/><rect x="780.0" y="458.5" width="3.5" height="3.5"/><rect x="767.0" y="468.0" width="3.5" height="3.5"/><rect x="773.5" y="468.0" width="3.5" height="3.5"/><rect x="780.0" y="468.0" width="3.5" height="3.5"/><rect x="767.0" y="477.5" width="3.5" height="3.5"/><rect x="773.5" y="477.5" width="3.5" height="3.5"/><rect x="780.0" y="477.5" width="3.5" height="3.5"/><rect x="767.0" y="487.0" width="3.5" height="3.5"/><rect x="773.5" y="487.0" width="3.5" height="3.5"/><rect x="780.0" y="487.0" width="3.5" height="3.5"/><rect x="692.0" y="462.0" width="3.5" height="3.5"/><rect x="698.3" y="462.0" width="3.5" height="3.5"/><rect x="704.6" y="462.0" width="3.5" height="3.5"/><rect x="710.9" y="462.0" width="3.5" height="3.5"/><rect x="692.0" y="470.5" width="3.5" height="3.5"/><rect x="698.3" y="470.5" width="3.5" height="3.5"/><rect x="704.6" y="470.5" width="3.5" height="3.5"/><rect x="692.0" y="479.0" width="3.5" height="3.5"/><rect x="704.6" y="479.0" width="3.5" height="3.5"/><rect x="710.9" y="479.0" width="3.5" height="3.5"/><rect x="692.0" y="487.5" width="3.5" height="3.5"/><rect x="698.3" y="487.5" width="3.5" height="3.5"/><rect x="704.6" y="487.5" width="3.5" height="3.5"/><rect x="710.9" y="487.5" width="3.5" height="3.5"/><rect x="730.0" y="458.0" width="1.5" height="1.5"/><rect x="733.0" y="458.0" width="1.5" height="1.5"/><rect x="730.0" y="461.0" width="1.5" height="1.5"/><rect x="733.0" y="461.0" width="1.5" height="1.5"/><rect x="730.0" y="464.0" width="1.5" height="1.5"/><rect x="733.0" y="464.0" width="1.5" height="1.5"/><rect x="730.0" y="467.0" width="1.5" height="1.5"/><rect x="733.0" y="467.0" width="1.5" height="1.5"/><rect x="730.0" y="470.0" width="1.5" height="1.5"/><rect x="733.0" y="470.0" width="1.5" height="1.5"/><rect x="730.0" y="473.0" width="1.5" height="1.5"/><rect x="733.0" y="473.0" width="1.5" height="1.5"/><rect x="730.0" y="476.0" width="1.5" height="1.5"/><rect x="733.0" y="476.0" width="1.5" height="1.5"/><rect x="730.0" y="479.0" width="1.5" height="1.5"/><rect x="733.0" y="479.0" width="1.5" height="1.5"/></g>
<path d="M55 545h50v-1h45v24h100v-6h10v4h120v24h33v127H55Z" fill="#186dbd"/>
<path d="M55 642h27v-14h24.700v10h15V586h7.300V553h5v33h7v62h9v-41h20v-18h5.700v-0h22.300v-19h30.300v23h19.700v24h32v-25.500h26v28.500h10l14-4 12 4v27.500h26v12.500h21v51H55Z" fill="#1263b3"/>
<path d="M683 600h19v-37.500l13-5 13-4.500 13 5 11.500 4.500v40h40v-20h30v30h30v-100h20v-17h22v17h6v-20h18v225H683Z" fill="#1567b7" opacity=".75"/>
<g fill="#3690e0" opacity=".55"><rect x="125.0" y="596.0" width="3" height="3"/><rect x="133.0" y="596.0" width="3" height="3"/><rect x="125.0" y="605.0" width="3" height="3"/><rect x="133.0" y="605.0" width="3" height="3"/><rect x="125.0" y="614.0" width="3" height="3"/><rect x="133.0" y="614.0" width="3" height="3"/><rect x="125.0" y="623.0" width="3" height="3"/><rect x="133.0" y="623.0" width="3" height="3"/><rect x="125.0" y="632.0" width="3" height="3"/><rect x="133.0" y="632.0" width="3" height="3"/><rect x="153.0" y="612.0" width="2.2" height="2.2"/><rect x="158.5" y="612.0" width="2.2" height="2.2"/><rect x="164.0" y="612.0" width="2.2" height="2.2"/><rect x="153.0" y="618.0" width="2.2" height="2.2"/><rect x="164.0" y="618.0" width="2.2" height="2.2"/><rect x="153.0" y="624.0" width="2.2" height="2.2"/><rect x="158.5" y="624.0" width="2.2" height="2.2"/><rect x="164.0" y="624.0" width="2.2" height="2.2"/><rect x="158.5" y="630.0" width="2.2" height="2.2"/><rect x="164.0" y="630.0" width="2.2" height="2.2"/><rect x="153.0" y="636.0" width="2.2" height="2.2"/><rect x="158.5" y="636.0" width="2.2" height="2.2"/><rect x="153.0" y="642.0" width="2.2" height="2.2"/><rect x="158.5" y="642.0" width="2.2" height="2.2"/><rect x="164.0" y="642.0" width="2.2" height="2.2"/><rect x="179.0" y="594.0" width="16" height="4"/><rect x="179.0" y="603.0" width="15" height="1.5"/><rect x="179.0" y="611.0" width="15" height="1.5"/><rect x="179.0" y="619.0" width="15" height="1.5"/><rect x="179.0" y="627.0" width="15" height="1.5"/><rect x="204.0" y="576.0" width="3" height="3"/><rect x="217.0" y="576.0" width="3" height="3"/><rect x="223.5" y="576.0" width="3" height="3"/><rect x="204.0" y="584.0" width="3" height="3"/><rect x="210.5" y="584.0" width="3" height="3"/><rect x="217.0" y="584.0" width="3" height="3"/><rect x="223.5" y="584.0" width="3" height="3"/><rect x="204.0" y="592.0" width="3" height="3"/><rect x="210.5" y="592.0" width="3" height="3"/><rect x="217.0" y="592.0" width="3" height="3"/><rect x="204.0" y="600.0" width="3" height="3"/><rect x="210.5" y="600.0" width="3" height="3"/><rect x="217.0" y="600.0" width="3" height="3"/><rect x="223.5" y="600.0" width="3" height="3"/><rect x="210.5" y="608.0" width="3" height="3"/><rect x="217.0" y="608.0" width="3" height="3"/><rect x="223.5" y="608.0" width="3" height="3"/><rect x="204.0" y="616.0" width="3" height="3"/><rect x="210.5" y="616.0" width="3" height="3"/><rect x="217.0" y="616.0" width="3" height="3"/><rect x="223.5" y="616.0" width="3" height="3"/><rect x="204.0" y="624.0" width="3" height="3"/><rect x="210.5" y="624.0" width="3" height="3"/><rect x="223.5" y="624.0" width="3" height="3"/><rect x="204.0" y="632.0" width="3" height="3"/><rect x="217.0" y="632.0" width="3" height="3"/><rect x="223.5" y="632.0" width="3" height="3"/><rect x="204.0" y="640.0" width="3" height="3"/><rect x="210.5" y="640.0" width="3" height="3"/><rect x="217.0" y="640.0" width="3" height="3"/><rect x="223.5" y="640.0" width="3" height="3"/><rect x="86.0" y="634.0" width="3" height="3"/><rect x="92.5" y="634.0" width="3" height="3"/><rect x="86.0" y="642.0" width="3" height="3"/><rect x="92.5" y="642.0" width="3" height="3"/><rect x="99.0" y="642.0" width="3" height="3"/><rect x="92.5" y="650.0" width="3" height="3"/><rect x="99.0" y="650.0" width="3" height="3"/><rect x="86.0" y="658.0" width="3" height="3"/><rect x="92.5" y="658.0" width="3" height="3"/><rect x="99.0" y="658.0" width="3" height="3"/><rect x="86.0" y="666.0" width="3" height="3"/><rect x="92.5" y="666.0" width="3" height="3"/><rect x="99.0" y="666.0" width="3" height="3"/><rect x="86.0" y="674.0" width="3" height="3"/><rect x="99.0" y="674.0" width="3" height="3"/><rect x="86.0" y="682.0" width="3" height="3"/><rect x="92.5" y="682.0" width="3" height="3"/><rect x="99.0" y="682.0" width="3" height="3"/><rect x="286.0" y="604.0" width="3" height="3"/><rect x="292.0" y="604.0" width="3" height="3"/><rect x="298.0" y="604.0" width="3" height="3"/><rect x="286.0" y="612.0" width="3" height="3"/><rect x="298.0" y="612.0" width="3" height="3"/><rect x="286.0" y="620.0" width="3" height="3"/><rect x="292.0" y="620.0" width="3" height="3"/><rect x="298.0" y="620.0" width="3" height="3"/><rect x="286.0" y="628.0" width="3" height="3"/><rect x="292.0" y="628.0" width="3" height="3"/><rect x="286.0" y="636.0" width="3" height="3"/><rect x="292.0" y="636.0" width="3" height="3"/><rect x="298.0" y="636.0" width="3" height="3"/><rect x="700.0" y="470.0" width="1" height="1"/><rect x="836.0" y="462.0" width="2.5" height="2.5"/><rect x="841.0" y="462.0" width="2.5" height="2.5"/><rect x="836.0" y="470.0" width="2.5" height="2.5"/><rect x="841.0" y="470.0" width="2.5" height="2.5"/><rect x="836.0" y="478.0" width="2.5" height="2.5"/><rect x="841.0" y="478.0" width="2.5" height="2.5"/><rect x="836.0" y="486.0" width="2.5" height="2.5"/><rect x="841.0" y="486.0" width="2.5" height="2.5"/><rect x="836.0" y="494.0" width="2.5" height="2.5"/><rect x="841.0" y="494.0" width="2.5" height="2.5"/><rect x="836.0" y="502.0" width="2.5" height="2.5"/><rect x="841.0" y="502.0" width="2.5" height="2.5"/><rect x="855.0" y="516.0" width="13" height="3"/><rect x="855.0" y="524.0" width="12" height="1.5"/><rect x="855.0" y="532.0" width="12" height="1.5"/><rect x="855.0" y="540.0" width="12" height="1.5"/><rect x="855.0" y="548.0" width="12" height="1.5"/><rect x="880.0" y="498.0" width="2.8" height="2.8"/><rect x="886.0" y="498.0" width="2.8" height="2.8"/><rect x="892.0" y="498.0" width="2.8" height="2.8"/><rect x="880.0" y="506.0" width="2.8" height="2.8"/><rect x="892.0" y="506.0" width="2.8" height="2.8"/><rect x="880.0" y="514.0" width="2.8" height="2.8"/><rect x="886.0" y="514.0" width="2.8" height="2.8"/><rect x="892.0" y="514.0" width="2.8" height="2.8"/><rect x="880.0" y="522.0" width="2.8" height="2.8"/><rect x="886.0" y="522.0" width="2.8" height="2.8"/><rect x="892.0" y="522.0" width="2.8" height="2.8"/><rect x="880.0" y="530.0" width="2.8" height="2.8"/><rect x="886.0" y="530.0" width="2.8" height="2.8"/><rect x="880.0" y="538.0" width="2.8" height="2.8"/><rect x="886.0" y="538.0" width="2.8" height="2.8"/><rect x="892.0" y="538.0" width="2.8" height="2.8"/><rect x="886.0" y="546.0" width="2.8" height="2.8"/><rect x="892.0" y="546.0" width="2.8" height="2.8"/><rect x="880.0" y="554.0" width="2.8" height="2.8"/><rect x="886.0" y="554.0" width="2.8" height="2.8"/><rect x="892.0" y="554.0" width="2.8" height="2.8"/><rect x="904.0" y="480.0" width="3" height="3"/><rect x="910.5" y="480.0" width="3" height="3"/><rect x="904.0" y="488.0" width="3" height="3"/><rect x="910.5" y="488.0" width="3" height="3"/><rect x="904.0" y="496.0" width="3" height="3"/><rect x="904.0" y="504.0" width="3" height="3"/><rect x="910.5" y="504.0" width="3" height="3"/><rect x="904.0" y="512.0" width="3" height="3"/><rect x="910.5" y="512.0" width="3" height="3"/><rect x="910.5" y="520.0" width="3" height="3"/><rect x="904.0" y="528.0" width="3" height="3"/><rect x="910.5" y="528.0" width="3" height="3"/><rect x="904.0" y="536.0" width="3" height="3"/><rect x="910.5" y="536.0" width="3" height="3"/><rect x="904.0" y="544.0" width="3" height="3"/><rect x="910.5" y="544.0" width="3" height="3"/><rect x="904.0" y="552.0" width="3" height="3"/><rect x="904.0" y="560.0" width="3" height="3"/><rect x="910.5" y="560.0" width="3" height="3"/><rect x="904.0" y="568.0" width="3" height="3"/><rect x="910.5" y="568.0" width="3" height="3"/></g>
<linearGradient id="btm" x1="0" y1="640" x2="0" y2="717" gradientUnits="userSpaceOnUse"><stop offset="0" stop-color="#0c5cac" stop-opacity="0"/><stop offset="1" stop-color="#0a57a7"/></linearGradient>
<rect x="55" y="640" width="864" height="77" fill="url(#btm)"/>
<rect x="355" y="565" width="7" height="4" fill="#c8dcf4"/><rect x="386.500" y="580" width="2.500" height="6" fill="#43b1ee"/><rect x="392" y="580" width="2.500" height="6" fill="#43b1ee"/>
<g id="cranes"><path d="M248.5 717V545.5L253.5 537.5L258.5 545.5V717M248.5 545.5L258.5 554.0M248.5 554.0H258.5M258.5 554.0L248.5 562.5M248.5 562.5H258.5M248.5 562.5L258.5 571.0M248.5 571.0H258.5M258.5 571.0L248.5 579.5M248.5 579.5H258.5M248.5 579.5L258.5 588.0M248.5 588.0H258.5M258.5 588.0L248.5 596.5M248.5 596.5H258.5M248.5 596.5L258.5 605.0M248.5 605.0H258.5M258.5 605.0L248.5 613.5M248.5 613.5H258.5M248.5 613.5L258.5 622.0M248.5 622.0H258.5M258.5 622.0L248.5 630.5M248.5 630.5H258.5M248.5 630.5L258.5 639.0M248.5 639.0H258.5M258.5 639.0L248.5 647.5M248.5 647.5H258.5M248.5 647.5L258.5 656.0M248.5 656.0H258.5M258.5 656.0L248.5 664.5M248.5 664.5H258.5M248.5 664.5L258.5 673.0M248.5 673.0H258.5M258.5 673.0L248.5 681.5M248.5 681.5H258.5M248.5 681.5L258.5 690.0M248.5 690.0H258.5M258.5 690.0L248.5 698.5M248.5 698.5H258.5M248.5 698.5L258.5 707.0M248.5 707.0H258.5M258.5 707.0L248.5 715.5M248.5 715.5H258.5M248.5 715.5L258.5 717M248.5 717H258.5" fill="none" stroke="#15306b" stroke-width="1.700"/><path d="M259 557.5H388M259 564H388M259.0 564L262.5 557.5M262.5 557.5L266.0 564M266.0 564L269.5 557.5M269.5 557.5L273.0 564M273.0 564L276.5 557.5M276.5 557.5L280.0 564M280.0 564L283.5 557.5M283.5 557.5L287.0 564M287.0 564L290.5 557.5M290.5 557.5L294.0 564M294.0 564L297.5 557.5M297.5 557.5L301.0 564M301.0 564L304.5 557.5M304.5 557.5L308.0 564M308.0 564L311.5 557.5M311.5 557.5L315.0 564M315.0 564L318.5 557.5M318.5 557.5L322.0 564M322.0 564L325.5 557.5M325.5 557.5L329.0 564M329.0 564L332.5 557.5M332.5 557.5L336.0 564M336.0 564L339.5 557.5M339.5 557.5L343.0 564M343.0 564L346.5 557.5M346.5 557.5L350.0 564M350.0 564L353.5 557.5M353.5 557.5L357.0 564M357.0 564L360.5 557.5M360.5 557.5L364.0 564M364.0 564L367.5 557.5M367.5 557.5L371.0 564M371.0 564L374.5 557.5M374.5 557.5L378.0 564M378.0 564L381.5 557.5M381.5 557.5L385.0 564M385.0 564L388.0 557.5" fill="none" stroke="#15306b" stroke-width="1.400"/><path d="M212 560.500h37M212 564h37" stroke="#15306b" stroke-width="1.300"/><rect x="211.500" y="559" width="14" height="8" fill="#15306b"/><path d="M253.500 538L320 557.500M253.500 538L290 557.500M253.500 538L214 560" stroke="#15306b" stroke-width=".9" fill="none"/><rect x="260.500" y="570" width="8.500" height="9" fill="#15306b"/><rect x="262" y="571.500" width="5" height="4" fill="#9fd0f0"/><path d="M330 564V661M337 564V661" stroke="#15306b" stroke-width=".9"/><rect x="313" y="663.300" width="41.500" height="3.200" fill="#eaf3fb"/><path d="M282.5 717V610.5L286.5 602.5L290.5 610.5V717M282.5 610.5L290.5 619.0M282.5 619.0H290.5M290.5 619.0L282.5 627.5M282.5 627.5H290.5M282.5 627.5L290.5 636.0M282.5 636.0H290.5M290.5 636.0L282.5 644.5M282.5 644.5H290.5M282.5 644.5L290.5 653.0M282.5 653.0H290.5M290.5 653.0L282.5 661.5M282.5 661.5H290.5M282.5 661.5L290.5 670.0M282.5 670.0H290.5M290.5 670.0L282.5 678.5M282.5 678.5H290.5M282.5 678.5L290.5 687.0M282.5 687.0H290.5M290.5 687.0L282.5 695.5M282.5 695.5H290.5M282.5 695.5L290.5 704.0M282.5 704.0H290.5M290.5 704.0L282.5 712.5M282.5 712.5H290.5M282.5 712.5L290.5 717M282.5 717H290.5" fill="none" stroke="#15306b" stroke-width="1.700"/><path d="M180 618H282M180 624H282M180.0 624L183.5 618M183.5 618L187.0 624M187.0 624L190.5 618M190.5 618L194.0 624M194.0 624L197.5 618M197.5 618L201.0 624M201.0 624L204.5 618M204.5 618L208.0 624M208.0 624L211.5 618M211.5 618L215.0 624M215.0 624L218.5 618M218.5 618L222.0 624M222.0 624L225.5 618M225.5 618L229.0 624M229.0 624L232.5 618M232.5 618L236.0 624M236.0 624L239.5 618M239.5 618L243.0 624M243.0 624L246.5 618M246.5 618L250.0 624M250.0 624L253.5 618M253.5 618L257.0 624M257.0 624L260.5 618M260.5 618L264.0 624M264.0 624L267.5 618M267.5 618L271.0 624M271.0 624L274.5 618M274.5 618L278.0 624M278.0 624L281.5 618M281.5 618L282.0 624" fill="none" stroke="#15306b" stroke-width="1.400"/><path d="M290.500 619h28M290.500 623h28" stroke="#15306b" stroke-width="1.200"/><rect x="306" y="617.500" width="12.500" height="7" fill="#15306b"/><path d="M286.500 603L225 618M286.500 603L318 618.500" stroke="#15306b" stroke-width=".9"/><path d="M221.500 624V699l1.500 2" stroke="#15306b" stroke-width="1" fill="none"/><rect x="275" y="630" width="5" height="6" fill="#9fd0f0"/><path d="M754.5 717V524L759.25 516L764 524V717M754.5 524L764 532.5M754.5 532.5H764M764 532.5L754.5 541.0M754.5 541.0H764M754.5 541.0L764 549.5M754.5 549.5H764M764 549.5L754.5 558.0M754.5 558.0H764M754.5 558.0L764 566.5M754.5 566.5H764M764 566.5L754.5 575.0M754.5 575.0H764M754.5 575.0L764 583.5M754.5 583.5H764M764 583.5L754.5 592.0M754.5 592.0H764M754.5 592.0L764 600.5M754.5 600.5H764M764 600.5L754.5 609.0M754.5 609.0H764M754.5 609.0L764 617.5M754.5 617.5H764M764 617.5L754.5 626.0M754.5 626.0H764M754.5 626.0L764 634.5M754.5 634.5H764M764 634.5L754.5 643.0M754.5 643.0H764M754.5 643.0L764 651.5M754.5 651.5H764M764 651.5L754.5 660.0M754.5 660.0H764M754.5 660.0L764 668.5M754.5 668.5H764M764 668.5L754.5 677.0M754.5 677.0H764M754.5 677.0L764 685.5M754.5 685.5H764M764 685.5L754.5 694.0M754.5 694.0H764M754.5 694.0L764 702.5M754.5 702.5H764M764 702.5L754.5 711.0M754.5 711.0H764M754.5 711.0L764 717M754.5 717H764" fill="none" stroke="#15306b" stroke-width="1.700"/><path d="M764.5 535.5H894M764.5 542.5H894M764.5 542.5L768.0 535.5M768.0 535.5L771.5 542.5M771.5 542.5L775.0 535.5M775.0 535.5L778.5 542.5M778.5 542.5L782.0 535.5M782.0 535.5L785.5 542.5M785.5 542.5L789.0 535.5M789.0 535.5L792.5 542.5M792.5 542.5L796.0 535.5M796.0 535.5L799.5 542.5M799.5 542.5L803.0 535.5M803.0 535.5L806.5 542.5M806.5 542.5L810.0 535.5M810.0 535.5L813.5 542.5M813.5 542.5L817.0 535.5M817.0 535.5L820.5 542.5M820.5 542.5L824.0 535.5M824.0 535.5L827.5 542.5M827.5 542.5L831.0 535.5M831.0 535.5L834.5 542.5M834.5 542.5L838.0 535.5M838.0 535.5L841.5 542.5M841.5 542.5L845.0 535.5M845.0 535.5L848.5 542.5M848.5 542.5L852.0 535.5M852.0 535.5L855.5 542.5M855.5 542.5L859.0 535.5M859.0 535.5L862.5 542.5M862.5 542.5L866.0 535.5M866.0 535.5L869.5 542.5M869.5 542.5L873.0 535.5M873.0 535.5L876.5 542.5M876.5 542.5L880.0 535.5M880.0 535.5L883.5 542.5M883.5 542.5L887.0 535.5M887.0 535.5L890.5 542.5M890.5 542.5L894.0 535.5" fill="none" stroke="#15306b" stroke-width="1.400"/><path d="M718 538h37M718 542h37" stroke="#15306b" stroke-width="1.300"/><rect x="717.500" y="537" width="14" height="7.500" fill="#15306b"/><path d="M759 516.500L826 535.500M759 516.500L795 535.500M759 516.500L720 538" stroke="#15306b" stroke-width=".9" fill="none"/><rect x="767.500" y="549.500" width="7" height="9" fill="#15306b"/><rect x="768.500" y="551" width="4.500" height="4" fill="#cfe6f8"/><path d="M835 542.500V634M842.500 542.500V634" stroke="#15306b" stroke-width=".9"/><path d="M838.500 634v5l-2 1.500" stroke="#15306b" stroke-width="1.300" fill="none"/><path d="M787 717V589.5L791.25 581.5L795.5 589.5V717M787 589.5L795.5 598.0M787 598.0H795.5M795.5 598.0L787 606.5M787 606.5H795.5M787 606.5L795.5 615.0M787 615.0H795.5M795.5 615.0L787 623.5M787 623.5H795.5M787 623.5L795.5 632.0M787 632.0H795.5M795.5 632.0L787 640.5M787 640.5H795.5M787 640.5L795.5 649.0M787 649.0H795.5M795.5 649.0L787 657.5M787 657.5H795.5M787 657.5L795.5 666.0M787 666.0H795.5M795.5 666.0L787 674.5M787 674.5H795.5M787 674.5L795.5 683.0M787 683.0H795.5M795.5 683.0L787 691.5M787 691.5H795.5M787 691.5L795.5 700.0M787 700.0H795.5M795.5 700.0L787 708.5M787 708.5H795.5M787 708.5L795.5 717.0M787 717.0H795.5" fill="none" stroke="#15306b" stroke-width="1.700"/><path d="M687 596H787M687 603H787M687.0 603L690.5 596M690.5 596L694.0 603M694.0 603L697.5 596M697.5 596L701.0 603M701.0 603L704.5 596M704.5 596L708.0 603M708.0 603L711.5 596M711.5 596L715.0 603M715.0 603L718.5 596M718.5 596L722.0 603M722.0 603L725.5 596M725.5 596L729.0 603M729.0 603L732.5 596M732.5 596L736.0 603M736.0 603L739.5 596M739.5 596L743.0 603M743.0 603L746.5 596M746.5 596L750.0 603M750.0 603L753.5 596M753.5 596L757.0 603M757.0 603L760.5 596M760.5 596L764.0 603M764.0 603L767.5 596M767.5 596L771.0 603M771.0 603L774.5 596M774.5 596L778.0 603M778.0 603L781.5 596M781.5 596L785.0 603M785.0 603L787.0 596" fill="none" stroke="#15306b" stroke-width="1.400"/><path d="M795.500 597.500h28M795.500 601.500h28" stroke="#15306b" stroke-width="1.200"/><rect x="811" y="596" width="12.500" height="7" fill="#15306b"/><path d="M791 582L730 596M791 582L823 597" stroke="#15306b" stroke-width=".9"/><path d="M728 603V677l1.500 2" stroke="#15306b" stroke-width="1" fill="none"/><rect x="781" y="608" width="4" height="5" fill="#cfe6f8"/></g>
<!-- tower: scaffolds -->
<g id="scaf" fill="none" stroke="#15306b" stroke-linecap="butt">
 <!-- main right scaffold -->
 <path d="M616.200 154.500V717M677 236V717" stroke-width="4"/>
 <path d="M629 256V560" stroke-width="3.200"/>
 <path d="M614.500 156.500H640M616 206H640M616 258.500H677M616 306H677M629 340H677M616 398H677M616 440H677M616 487H677M616 528H677M640 563H677M640 625H677" stroke-width="3.500"/>
 <path d="M617 160l23 18M617 205l23-27M617 210l60 46M640 232l-23 25M630 262l46 42M676 262l-46 42M617 262l12 42M630 310l46 86M676 310l-46 86M630 402l46 36M676 402l-46 36M630 444l46 41M676 444l-46 41M630 491l46 35M676 491l-46 35M641 532l35 30M676 532l-35 30M641 567l35 56M676 567l-35 56M618 310l11 28M617 398l12-56" stroke-width="3"/>
 <!-- mid scaffolds -->
 <path d="M465 276V520M513 276V520M577 330V520M590 330V520M545 340V400" stroke-width="1.600"/>
 <path d="M465 279H513M465 355H513M465 372H513M513 340H577M513 368H577M513 396H577M577 345H616M577 380H616M577 440H616M577 490H616M465 440H513M465 480H513" stroke-width="1.600"/>
 <path d="M513 341l64 26M577 341l-64 26M513 369l64 26M577 369l-64 26M465 373l48 66M513 373l-48 66M465 441l48 38M513 441l-48 38M578 346l38 33M616 346l-38 33M578 381l38 58M616 381l-38 58M578 441l38 48M616 441l-38 48" stroke-width="1.500"/>
 <!-- 1979 sign back scaffold + hotel scaffold -->
 <path d="M409.500 567V717M400 520V717" stroke-width="2"/>
 <path d="M400 551l44 53M400 610l44-50M400 612l15 40M400 690l15-38" stroke-width="2"/>
</g>
<!-- building behind skier sign -->
<rect x="584" y="490" width="46" height="40" fill="#1f7fd4"/>
<g fill="#4ab4f0"><rect x="588" y="494" width="3" height="3"/><rect x="594" y="494" width="3" height="3"/><rect x="600" y="494" width="3" height="3"/><rect x="606" y="494" width="3" height="3"/><rect x="588" y="500" width="3" height="3"/><rect x="594" y="500" width="3" height="3"/><rect x="600" y="500" width="3" height="3"/><rect x="606" y="500" width="3" height="3"/><rect x="588" y="506" width="3" height="3"/><rect x="594" y="506" width="3" height="3"/><rect x="600" y="506" width="3" height="3"/><rect x="588" y="512" width="3" height="3"/><rect x="594" y="512" width="3" height="3"/><rect x="600" y="512" width="3" height="3"/><rect x="606" y="512" width="3" height="3"/></g>
<!-- water tower -->
<g>
 <path d="M428 318l-5.500 52M450 318l9 47M439 318v50" stroke="#15306b" stroke-width="1.600" fill="none"/>
 <path d="M427 330l24 14M451 330l-26 14M425 346l30 16M455 346l-32 16" stroke="#15306b" stroke-width="1.200" fill="none"/>
 <path d="M438.700 289.500L451.500 296H426.500Z" fill="#15306b"/>
 <rect x="427.500" y="296" width="23.500" height="19" fill="#1b3a70" stroke="#2c6aa6" stroke-width="1"/>
 <rect x="424.500" y="315" width="30" height="3.500" fill="#15306b"/>
</g>
<!-- SURF NEVER sign -->
<g>
 <path d="M636 150H703V240.500L636 229.500Z" fill="#15306b"/>
 <path d="M639.500 150H703V239L639.500 228.500Z" fill="#1d86d8"/>
 <g font-family="Liberation Sans, sans-serif" font-weight="bold" font-style="italic" fill="#c2202c" transform="rotate(11 670 195)">
  <text x="656" y="163" font-size="22" textLength="30" lengthAdjust="spacingAndGlyphs">SURF</text>
  <text x="651" y="184.500" font-size="22.500" textLength="39" lengthAdjust="spacingAndGlyphs">NEVER</text>
  <text x="641" y="206.500" font-size="23.500" textLength="58" lengthAdjust="spacingAndGlyphs">GOES OUT</text>
  <text x="643" y="228.500" font-size="23.500" textLength="55" lengthAdjust="spacingAndGlyphs">OF STYLE</text>
 </g>
</g>
<!-- astronaut sign -->
<g>
 <path d="M648 279q0-4 4-4h10q10-6.500 23-5.500 12 .5 22 5.500h14.500q4 0 4 4v37q0 4-4 4h-14.500q-10 5.500-22 5.500-13 0-23-5.500h-10q-4 0-4-4z" fill="#16306c"/>
 <path d="M648 279q0-4 4-4h10q10-6.500 23-5.500 12 .5 22 5.500h14.500q4 0 4 4v37q0 4-4 4h-14.500q-10 5.500-22 5.500-13 0-23-5.500h-10q-4 0-4-4z" fill="none" stroke="#fff" stroke-width="1.600" stroke-dasharray="1.500 2.300" transform="translate(686 297.500) scale(.945 .93) translate(-686 -297.500)"/>
 <path d="M652.500 281h12q9-6 21-5.500 11 .5 20 5.500h14.500v33h-14.500q-9 5-20 5-12 0-21-5h-12z" fill="#2aa9b6"/>
 <path d="M652.500 300c6-14 16-22 30-23-8 6-12 14-13 24-2 8-8 12-17 13z" fill="#1a7486"/>
 <path d="M700 279l20 2v22c-6-2-10-8-12-14z" fill="#7fe0e0"/>
 <path d="M668 312c8-4 20-8 34-16l8 1c-8 10-22 17-36 19z" fill="#d8e23a"/>
 <path d="M682 282c3-4 9-4 11 0l2 8 4 6-3 8-5 6-6-2 1-8-5-6z" fill="#e8eef2" stroke="#6a7a8a" stroke-width=".8"/>
 <circle cx="687.500" cy="283" r="3.300" fill="#f4f6f8" stroke="#555" stroke-width=".8"/>
</g>
<!-- octopus sign -->
<g>
 <path d="M634 340.500L702 352.500V423.500L634 410.500Z" fill="#16306c"/>
 <path d="M636 343L700.500 354.200V421.500L636 409Z" fill="#58b8f2"/>
 <path d="M638.500 346L698 356.500V418.500L638.500 407Z" fill="#1d80d8"/>
 <path d="M638.500 352l59.500 10.500v4l-59.500-10.500zM638.500 362l59.500 10.500v3l-59.500-10.500zM638.500 392l59.500 10.500v4l-59.500-10.500zM638.500 400l59.500 11v2.500l-59.500-11z" fill="#4aa8ee" opacity=".8"/>
 <path d="M638.500 372l59.500 10.500v8l-59.500-10.500z" fill="#1666c2" opacity=".7"/>
 <g transform="translate(668 383) scale(1.28) translate(-668 -383)">
 <path d="M645 372c4-2 6 6 10 8 2-10 6-16 13-16s12 6 13 15c4-1 7-8 12-5-4 2-6 10-12 12 0 6-6 10-13 10s-12-4-13-9c-5-1-7-10-10-15z" fill="#16306c"/>
 <path d="M656 366c3-5 6-3 5 2-1 5-1 10 2 14-5-2-8-8-7-16zM679 366c-3-5-6-3-5 2 1 5 1 10-2 14 5-2 8-8 7-16zM651 378c2 4 5 7 9 8-4 1-8-2-9-8zM686 378c-2 4-5 7-9 8 4 1 8-2 9-8z" fill="#ecd522"/>
</g>
<!-- WEST 82 -->
<g>
 <rect x="577" y="252" width="50" height="29.500" fill="#fff" stroke="#16306c" stroke-width="1"/>
 <rect x="579.500" y="254.500" width="45" height="24.500" rx="2" fill="none" stroke="#16306c" stroke-width="1.600"/>
 <text x="581.500" y="273.700" font-family="Liberation Sans, sans-serif" font-weight="bold" font-size="17.600" fill="#16306c" textLength="41" lengthAdjust="spacingAndGlyphs">WEST</text>
 <rect x="577" y="281.500" width="50" height="54" fill="#16306c"/>
 <path d="M581 284.500q5 3 10-1 5.500 4 11 0 5.500 4 11 0 5 4 10 1v14q2 8 0 14-2 8-21 13-19-5-21-13-2-6 0-14z" fill="#fff"/>
 <text x="585" y="318" font-family="Liberation Sans, sans-serif" font-weight="bold" font-size="33" fill="#16306c" textLength="34.500" lengthAdjust="spacingAndGlyphs">82</text>
</g>
<!-- no surfing circle -->
<g>
 <circle cx="602.300" cy="359" r="26.300" fill="#3a1a2a"/>
 <circle cx="602.300" cy="359" r="25.300" fill="#cc222c"/>
 <circle cx="602.300" cy="359" r="22" fill="#fff"/>
 <circle cx="602" cy="343" r="4" fill="#111"/>
 <path d="M597 349h10.500v17.500h-2v13h-2.800v-13h-1v13h-2.800v-13h-1.900z" fill="#111"/>
 <path d="M586 346c8 0 22 8 32 26-12-4-26-12-32-26z" fill="#111"/>
 <path d="M587 350c-4 6-2 14 2 16s5-6 1-9c6 4 6 16 1 19" fill="none" stroke="#777" stroke-width=".9"/>
</g>
<!-- 1979 PIPE sign -->
<g>
 <path d="M412 346.500L466 361V600L412 586Z" fill="#15306b"/>
 <path d="M415.500 351L464 364V596L415.500 583Z" fill="#e2eaf5"/>
 <path d="M424 378L462 388V530L424 524Z" fill="#fff" opacity=".6"/>
 <text transform="translate(421 366) rotate(13)" font-family="Liberation Serif, serif" font-weight="bold" font-style="italic" font-size="19" fill="#101c4a" textLength="42" lengthAdjust="spacingAndGlyphs">1979</text>
 <text transform="translate(428 383) rotate(90)" font-family="Liberation Serif, serif" font-weight="bold" font-style="italic" font-size="44" fill="#2b8ad8" textLength="150" lengthAdjust="spacingAndGlyphs">PIPELINE</text>
 <text transform="translate(430 384.500) rotate(90)" font-family="Liberation Serif, serif" font-weight="bold" font-style="italic" font-size="44" fill="none" stroke="#f2f6fb" stroke-width="1.200" textLength="150" lengthAdjust="spacingAndGlyphs" opacity=".8">PIPELINE</text>
 <text transform="translate(420.500 536) rotate(90)" font-family="Liberation Serif, serif" font-weight="bold" font-size="14" fill="#101c4a" textLength="56" lengthAdjust="spacingAndGlyphs">BEACH</text>
</g>
<!-- SURFER vertical sign -->
<g>
 <rect x="546" y="356" width="34" height="168" fill="#dfeaf4"/>
 <rect x="548.500" y="358.500" width="29" height="163" fill="#15306b"/>
 <g font-family="Liberation Sans, sans-serif" font-weight="bold" fill="#2aa3ab" stroke="#2aa3ab" stroke-width="1" lengthAdjust="spacingAndGlyphs">
  <text x="551" y="388" font-size="31" textLength="24" lengthAdjust="spacingAndGlyphs">S</text><text x="551" y="417" font-size="31" textLength="24" lengthAdjust="spacingAndGlyphs">U</text><text x="551" y="449" font-size="27" textLength="24" lengthAdjust="spacingAndGlyphs">R</text><text x="552" y="474" font-size="25" textLength="22" lengthAdjust="spacingAndGlyphs">F</text><text x="552" y="500" font-size="25" textLength="22" lengthAdjust="spacingAndGlyphs">E</text><text x="551" y="523" font-size="25" textLength="24" lengthAdjust="spacingAndGlyphs">R</text>
 </g>
</g>
<!-- burger sign -->
<g>
 <path d="M470 262q0-20 20-20t20 20v1.500h-40z" fill="#d9271f" stroke="#f47f2a" stroke-width="2.200"/>
 <rect x="469" y="264.500" width="42" height="3.500" rx="1.700" fill="#f6b24a" stroke="#f47f2a" stroke-width="1"/>
 <rect x="470" y="268.500" width="40" height="5" rx="2" fill="#5b2a1e"/>
 <path d="M470 274h40v3l-4 3-5-3-5 3-6-3-5 3-5-3-5 3-5-3z" fill="#2f9e49"/>
 <path d="M470.500 278.500h39q0 7-8 7h-23q-8 0-8-7z" fill="#d9271f" stroke="#f47f2a" stroke-width="2"/>
 <path d="M476 277.500l5 3 5-3 5 3 6-3 5 3 5-3" fill="none" stroke="#2f9e49" stroke-width="2.500"/>
 <g font-family="Liberation Mono, monospace" font-weight="bold" fill="#dc2c20" stroke="#f47f2a" stroke-width="2.200" paint-order="stroke">
  <text x="476" y="302.500" font-size="17" textLength="33" lengthAdjust="spacingAndGlyphs">THE</text>
  <text x="470" y="320.500" font-size="17" textLength="44.500" lengthAdjust="spacingAndGlyphs">BEST</text>
  <text x="473" y="338.700" font-size="17" textLength="38" lengthAdjust="spacingAndGlyphs">CITY</text>
  <text x="461" y="356.200" font-size="17" textLength="62" lengthAdjust="spacingAndGlyphs">BURGER</text>
 </g>
 <path d="M478 304h29M472 322h41M475 340h35" stroke="#f47f2a" stroke-width="1.200"/>
 <!-- panther -->
 <path d="M491 366c2-4 8-6 14-6l10-1c4-1 7-2 10 0l-2 3c-2 1-3 3-3 6l1 3h-2l-3-5-8 0-6 0-4 5h-2l2-6-3 0-3 2z" fill="#15306b"/>
</g>
<!-- we Run City -->
<g>
 <rect x="475.700" y="372.500" width="70.500" height="21.500" fill="#fdfdfd" stroke="#c8d4e4" stroke-width=".6"/>
 <text x="478.500" y="388.500" font-family="DejaVu Sans, sans-serif" font-style="italic" font-size="12.500" fill="#1a68b6" textLength="65" lengthAdjust="spacingAndGlyphs">we Run City</text>
</g>
<!-- Surfer hex -->
<g>
 <path d="M456 411L471 393.700H548.700L565 412.500L549 440H471Z" fill="#e9c9a8"/>
 <path d="M456 411L471 436l0 4-15-25z" fill="#15306b"/>
 <path d="M480 396v3M490 396v3M500 396v3M510 396v3M520 396v3M530 396v3M540 396v3M480 431v3M490 431v3M500 431v3M510 431v3M520 431v3M530 431v3M540 431v3" stroke="#b89a7a" stroke-width="1"/>
 <ellipse cx="511" cy="413.700" rx="48" ry="12.800" fill="#fff" stroke="#15306b" stroke-width="2"/>
 <path d="M497 426l16-25 5 0-15 25z" fill="#2aa3ab"/>
 <text x="482" y="419" font-family="Liberation Serif, serif" font-style="italic" font-weight="bold" font-size="19" fill="#15306b" textLength="61" lengthAdjust="spacingAndGlyphs">Surfer</text>
 <path d="M482 421h24" stroke="#15306b" stroke-width="1.300"/>
</g>
<!-- TATTOO -->
<g>
 <path d="M561 406L652 399.500V420L561 426.500Z" fill="#2a7ad0"/>
 <path d="M563 408L650 401.800V418L563 424.500Z" fill="#1a2868"/>
 <text transform="translate(565.500 422.500) rotate(-4)" font-family="Liberation Sans, sans-serif" font-weight="bold" font-size="16.500" fill="#d2222c" textLength="83" lengthAdjust="spacingAndGlyphs">TATTOO</text>
 <path d="M571 421.500v3M585 420.500v3M599 419.500v3M613 418.500v3" stroke="#f4c8cc" stroke-width="1.600"/>
</g>
<!-- skier neon sign -->
<g>
 <path d="M588.500 427L658 424V478L588.500 481Z" fill="#16255e"/>
 <rect x="612" y="478" width="18" height="48" fill="#16255e"/>
 <path d="M618 429c3-3 7-1 6 3 8 2 10 10 9 18l4 6 8 0 0 3-10 1-4-6-2 8-8 10-8 6M616 433c-5 4-8 12-7 20l-2 8 6-2 3-10M604 474c16 2 36 0 52-6" fill="none" stroke="#d2222c" stroke-width="1.500"/>
 <path d="M651 435c-4-3-9 0-8 4s8 4 8 9-6 6-9 3" fill="none" stroke="#e0303a" stroke-width="2.600"/>
 <path d="M640 456h12v4M640 462h10" stroke="#d2222c" stroke-width="1.200" fill="none"/>
</g>
<!-- arrow sign -->
<g>
 <path d="M576.500 486V464q0-14 14-14h4v-6l10 9.500-10 9.500v-6h-2q-6 0-6 8v21z" fill="#1a2f7a" stroke="#6ec0f4" stroke-width="1.400"/>
 <g fill="#e23a44"><circle cx="581.500" cy="481" r="1.600"/><circle cx="581.500" cy="472" r="1.600"/><circle cx="582.500" cy="463" r="1.600"/><circle cx="587" cy="456.500" r="1.600"/><circle cx="594" cy="453.500" r="1.600"/></g>
</g>
<!-- light panels + lamp -->
<path d="M466 442h28v78h-28z" fill="#3a9be2" opacity=".85"/>
<path d="M469 446h22v30h-22z" fill="#6cc0f2" opacity=".8"/>
<g>
 <path d="M480 466c-10-6-22-4-24 8" fill="none" stroke="#15306b" stroke-width="1.600"/>
 <path d="M446 495q2-18 10-21 8 3 10 21z" fill="#15306b"/>
</g>
<!-- HOTEL + bottom signs -->
<g>
 <rect x="406" y="600" width="38" height="117" fill="#1a74c8"/>
 <path d="M409.500 567V717M400 612l15 40M400 690l15-38" stroke="#15306b" stroke-width="2" fill="none"/>
 <rect x="414.500" y="606" width="18.500" height="111" fill="#15306b"/>
 <g font-family="Liberation Sans, sans-serif" font-weight="bold" font-size="20" fill="#3d86d6" text-anchor="middle">
  <text x="423.700" y="624">H</text><text x="423.700" y="646">O</text><text x="423.700" y="668">T</text><text x="423.700" y="690">E</text><text x="423.700" y="711">L</text>
 </g>
 <path d="M414.500 627.500h18.500M414.500 649.500h18.500M414.500 671.500h18.500M414.500 693.500h18.500" stroke="#2a6ac0" stroke-width="1"/>
 <path d="M443 590V664" stroke="#e6eef8" stroke-width="2"/>
</g>
<!-- right-bottom scaffold bg -->
<rect x="640" y="560" width="37" height="157" fill="#1a74c8"/>
<g fill="none" stroke="#15306b"><path d="M640 563H677M640 625H677" stroke-width="3.500"/><path d="M641 567l35 56M676 567l-35 56" stroke-width="3"/><path d="M677 424V717" stroke-width="4.500"/></g>
<path d="M668 630h8v87h-8z" fill="#2385da"/>
<path d="M668 640h9M668 682h9" stroke="#4aa8ee" stroke-width="2"/>
<!-- Whitehaven billboard -->
<g>
 <rect x="442.500" y="516" width="197" height="149" fill="#1c7bd0"/>
 <path d="M442.500 516h197v3h-197z" fill="#15306b" opacity=".6"/>
 <rect x="448" y="522" width="184" height="139" fill="#d32029"/>
 <clipPath id="sunclip"><rect x="450" y="530" width="54" height="35.500"/></clipPath><circle cx="476.200" cy="556" r="22.500" fill="#f8ecec" clip-path="url(#sunclip)"/>
 <g stroke="#cc222c" fill="none" stroke-linecap="round"><path d="M476.500 565c0-7-1-14-3-21" stroke-width="1.600"/><path d="M484.500 565c0-4 .5-8 1.500-12" stroke-width="1.200"/>
 <path d="M473.500 544c-3-4-7-5-10-3M473.500 544c-1-4-4-7-8-7M473.500 544c1-4 0-7-2-9M473.500 544c3-4 7-5 10-3M473.500 544c4-1 7 1 9 4M473.500 544c-4 1-6 4-7 7M473.500 544c3 2 4 5 4 8" stroke-width="1.700"/>
 <path d="M486 553c-2-3-5-3-7-2M486 553c0-3-2-5-4-6M486 553c2-3 5-3 7-1M486 553c3 0 5 2 5 5M486 553c-3 1-4 3-4 6" stroke-width="1.400"/></g>
 <g font-family="Liberation Serif, serif" font-weight="bold" font-style="italic">
  <text transform="translate(459.500 621) rotate(-19.500) skewX(-10)" font-size="55" fill="#3a1438" textLength="176" lengthAdjust="spacingAndGlyphs" opacity=".75">Whitehaven</text>
  <text transform="translate(458 618.500) rotate(-19.500) skewX(-10)" font-size="55" fill="#fff" textLength="176" lengthAdjust="spacingAndGlyphs">Whitehaven</text>
  <text transform="translate(510.500 646.500) rotate(-12) skewX(-10)" font-size="58" fill="#3a1438" textLength="108" lengthAdjust="spacingAndGlyphs" opacity=".75">Beach</text>
  <text transform="translate(509 644) rotate(-12) skewX(-10)" font-size="58" fill="#fff" textLength="108" lengthAdjust="spacingAndGlyphs">Beach</text>
 </g>
</g>
<!-- NO SURFING sign -->
<g transform="rotate(-4.500 527 487)">
 <rect x="497" y="446" width="60" height="82" rx="4.500" fill="#fff" stroke="#8a1a22" stroke-width=".8"/>
 <rect x="499.300" y="448.300" width="55.400" height="77.400" rx="3.500" fill="none" stroke="#cc2a32" stroke-width="1.300"/>
 <g font-family="Liberation Sans, sans-serif" font-weight="bold" fill="#16255e">
  <text x="507" y="473.500" font-size="24" textLength="36" lengthAdjust="spacingAndGlyphs">GO</text>
  <text x="502" y="490.500" font-size="15" textLength="51" lengthAdjust="spacingAndGlyphs">SURFING</text>
  <text x="503" y="504.500" font-size="12.500" textLength="51" lengthAdjust="spacingAndGlyphs">Prohibited</text>
  <text x="511" y="521" font-size="21" textLength="37" lengthAdjust="spacingAndGlyphs">area</text>
 </g>
 <text x="503" y="474.500" font-family="Liberation Sans, sans-serif" font-weight="bold" font-size="25" fill="#cc222c" opacity=".9" textLength="19" lengthAdjust="spacingAndGlyphs">N</text>
</g>
<!-- grey-navy sign -->
<g>
 <path d="M441.500 669L477.300 662.300V717H441.500Z" fill="#173674"/>
 <g stroke="#3f7fd0" stroke-width="1.300" fill="none"><path d="M445 676l29-5.500M445 684l29-5.500M445 699l29-5.500M445 707l29-5.500"/><path d="M445 680l20-3.800" stroke-width="3" stroke-dasharray="1 1"/><path d="M447 692l22-5" stroke-width="2.500"/><path d="M452 713l18-3.500" stroke-width="3" stroke-dasharray="1 1"/></g>
</g>
<!-- BIG-RIDER -->
<g>
 <path d="M477.300 662.300L483.800 652.500V717H477.300Z" fill="#15306b"/>
 <rect x="483.800" y="652.500" width="124.200" height="64.500" fill="#1f8fe2"/>
 <path d="M483.800 652.500h124.200v2.500h-124.200z" fill="#15306b" opacity=".7"/>
 <path d="M500 717l30-64h14l-30 64z" fill="#45a8ee" opacity=".6"/>
 <circle cx="546" cy="709" r="47" fill="#15306b"/>
 <circle cx="546" cy="709" r="42.500" fill="none" stroke="#2a62b4" stroke-width="1.200"/>
 <text x="546" y="677.500" font-family="Liberation Sans, sans-serif" font-size="6.500" fill="#3f8fe0" text-anchor="middle" letter-spacing=".6">BIG-RIDER</text>
 <text x="546" y="689" font-family="Liberation Serif, serif" font-style="italic" font-size="5.500" fill="#3f8fe0" text-anchor="middle">classic</text>
 <text x="511.500" y="717.500" font-family="Liberation Serif, serif" font-weight="bold" font-style="italic" font-size="31" fill="#fff" textLength="72" lengthAdjust="spacingAndGlyphs">Surfing</text>
</g>
<rect x="616" y="690" width="9.500" height="27" fill="#15306b"/>
<!-- small Surfing sign -->
<g>
 <rect x="626" y="622.400" width="42" height="95" fill="#2a8fe2"/>
 <rect x="628.500" y="625" width="37.500" height="92" fill="#d32029"/>
 <circle cx="646" cy="642" r="11.500" fill="#e2525a" opacity=".55"/>
 <path d="M646 644c1.500-2 4-1 3.500 1.500l1 8-1.500 10 2 9h-1.800l-3-9-.7-9z" fill="#1a2a66"/>
 <path d="M640 672c8 1 18-5 24-16" fill="none" stroke="#1a2a66" stroke-width="1.300"/>
 <text x="631" y="686" font-family="Liberation Sans, sans-serif" font-weight="bold" font-style="italic" font-size="8.500" fill="#1a2a66" textLength="32" lengthAdjust="spacingAndGlyphs">Surfing</text>
</g>
<path d="M55.2 211.4C63.9 225.6 92.3 274.1 107.5 296.7C122.7 319.3 133.4 331.5 146.3 347.0C159.2 362.5 172.1 375.8 185.0 389.7C197.9 403.6 208.4 414.7 223.8 430.4C239.2 446.1 261.5 470.4 277.5 484.0C293.5 497.6 305.8 502.9 320.0 512.0C334.2 521.1 348.4 530.9 362.6 538.5C376.8 546.1 392.9 552.7 405.0 557.6C417.1 562.5 430.0 566.3 435.0 568.0" fill="none" stroke="#0e2258" stroke-width="2.300"/>
<path d="M640.0 611.0C650.0 611.2 681.3 612.3 700.0 612.0C718.7 611.7 730.8 611.3 752.0 609.0C773.2 606.7 799.3 602.7 827.0 598.0C854.7 593.3 902.8 583.8 918.0 581.0" fill="none" stroke="#0e2258" stroke-width="2"/>
<path d="M55.0 515.6C65.0 520.3 95.8 535.6 115.0 544.0C134.2 552.4 151.2 559.0 170.0 566.0C188.8 573.0 208.3 580.5 227.5 586.0C246.7 591.5 265.8 595.9 285.0 599.0C304.2 602.1 323.3 603.4 342.5 604.7C361.7 606.0 383.3 606.7 400.0 606.7C416.7 606.7 424.3 606.0 442.6 604.5C460.9 603.0 489.6 599.7 510.0 597.6C530.4 595.5 551.2 593.7 565.0 592.0C578.8 590.3 580.1 590.1 592.5 587.4C604.9 584.7 621.3 581.0 639.2 575.6C657.1 570.2 677.4 562.9 700.0 555.0C722.6 547.1 752.9 537.9 775.0 528.4C797.1 518.9 813.4 508.6 832.6 498.0C851.8 487.4 875.6 473.2 890.0 465.0C904.4 456.8 914.2 451.7 919.0 449.0" fill="none" stroke="#0e2258" stroke-width="1.800"/>
<g fill="#16255c"><path d="M827 497c1-4 5-6 9-4l5 3-6 3c-3 1-6 0-8-2z"/><path d="M838 491c1-4 5-6 9-4l6 4-7 2c-3 1-6 0-8-2z"/><path d="M862.500 471c2-3 6-2 6.500 2l1.500 14 2.500 10-3.500-7-4.500-5c-2.500-4-3.500-10-2.500-14z"/>
<path d="M586 571c1.500-2.500 5-2 5.500 1l0.500 8 1 8-2.500-6-3.500-3c-2-3-2-6-1-8z"/><path d="M607 572c2-2.500 5-1.500 5.500 1.500l1.500 5 4 5-5-3-4-2c-2.500-2-3-4.500-2-6.500z"/></g>
</svg>
<!-- RULER MARKS -->
<svg class="a" style="left:0;top:0" width="940" height="720" viewBox="0 0 940 720" font-family="Liberation Sans, sans-serif" font-size="10" fill="#c6c6c6">
<path d="M57.6 150v-2.5M71.4 150v-5M85.2 150v-2.5M98.9 150v-3.5M112.7 150v-2.5M126.5 150v-7M140.3 150v-2.5M154.1 150v-3.5M167.8 150v-2.5M181.6 150v-5M195.4 150v-2.5M209.2 150v-3.5M223.0 150v-2.5M236.8 150v-7M250.5 150v-2.5M264.3 150v-3.5M278.1 150v-2.5M291.9 150v-5M305.7 150v-2.5M319.4 150v-3.5M333.2 150v-2.5M347.0 150v-7M360.8 150v-2.5M374.6 150v-3.5M388.3 150v-2.5M402.1 150v-5M415.9 150v-2.5M429.7 150v-3.5M443.5 150v-2.5M457.2 150v-7M471.0 150v-2.5M484.8 150v-3.5M498.6 150v-2.5M512.4 150v-5M526.2 150v-2.5M539.9 150v-3.5M553.7 150v-2.5M567.5 150v-7M581.3 150v-2.5M595.1 150v-3.5M608.8 150v-2.5M622.6 150v-5M636.4 150v-2.5M650.2 150v-3.5M664.0 150v-2.5M677.8 150v-7M691.5 150v-2.5M705.3 150v-3.5M719.1 150v-2.5M732.9 150v-5M746.7 150v-2.5M760.4 150v-3.5M774.2 150v-2.5M788.0 150v-7M801.8 150v-2.5M815.6 150v-3.5M829.3 150v-2.5M843.1 150v-5M856.9 150v-2.5M870.7 150v-3.5M884.5 150v-2.5M898.2 150v-7M912.0 150v-2.5M925.8 150v-3.5" stroke="#d9d9d9" stroke-width="1"/>
<text x="129.0" y="141">2</text>
<text x="239.2" y="141">3</text>
<text x="349.5" y="141">4</text>
<text x="459.8" y="141">5</text>
<text x="570.0" y="141">6</text>
<text x="680.2" y="141">7</text>
<text x="790.5" y="141">8</text>
<text x="900.8" y="141">9 inches</text>
<text x="63.0" y="141" word-spacing="1">1 1/2</text>
<text x="173.2" y="141" word-spacing="1">2 1/2</text>
<text x="283.5" y="141" word-spacing="1">3 1/2</text>
<text x="393.8" y="141" word-spacing="1">4 1/2</text>
<text x="504.0" y="141" word-spacing="1">5 1/2</text>
<text x="614.2" y="141" word-spacing="1">6 1/2</text>
<text x="724.5" y="141" word-spacing="1">7 1/2</text>
<text x="834.8" y="141" word-spacing="1">8 1/2</text>
<path d="M55 154.8h-3.5M55 168.6h-2.5M55 182.4h-5M55 196.2h-2.5M55 209.9h-3.5M55 223.7h-2.5M55 237.5h-7M55 251.3h-2.5M55 265.1h-3.5M55 278.8h-2.5M55 292.6h-5M55 306.4h-2.5M55 320.2h-3.5M55 334.0h-2.5M55 347.8h-7M55 361.5h-2.5M55 375.3h-3.5M55 389.1h-2.5M55 402.9h-5M55 416.7h-2.5M55 430.4h-3.5M55 444.2h-2.5M55 458.0h-7M55 471.8h-2.5M55 485.6h-3.5M55 499.3h-2.5M55 513.1h-5M55 526.9h-2.5M55 540.7h-3.5M55 554.5h-2.5M55 568.2h-7M55 582.0h-2.5M55 595.8h-3.5M55 609.6h-2.5M55 623.4h-5M55 637.2h-2.5M55 650.9h-3.5M55 664.7h-2.5M55 678.5h-7M55 692.3h-2.5M55 706.1h-3.5" stroke="#d9d9d9" stroke-width="1"/>
<text transform="translate(46.500 234.6) rotate(-90)">6</text>
<text transform="translate(46.500 189.5) rotate(-90)" word-spacing="1">6 1/2</text>
<text transform="translate(46.500 344.9) rotate(-90)">5</text>
<text transform="translate(46.500 299.8) rotate(-90)" word-spacing="1">5 1/2</text>
<text transform="translate(46.500 455.1) rotate(-90)">4</text>
<text transform="translate(46.500 410.0) rotate(-90)" word-spacing="1">4 1/2</text>
<text transform="translate(46.500 565.4) rotate(-90)">3</text>
<text transform="translate(46.500 520.2) rotate(-90)" word-spacing="1">3 1/2</text>
<text transform="translate(46.500 675.6) rotate(-90)">2</text>
<text transform="translate(46.500 630.5) rotate(-90)" word-spacing="1">2 1/2</text>
<path d="M769.500 131v19" stroke="#8a8a8a" stroke-width="1" stroke-dasharray="1.500 1.500"/>
<path d="M34 358.500h21" stroke="#8a8a8a" stroke-width="1" stroke-dasharray="1.500 1.500"/>
</svg>
<!-- OBJECTS DOCKER -->
<div class="a" style="left:940px;top:105px;width:358px;height:656px;background:#ebebeb"></div>
<div class="a" style="left:940px;top:105px;width:358px;height:26px;background:#e3e3e3;border-top:1px solid #d2d2d2;border-bottom:1px solid #cfcfcf"></div>
<div class="t" style="left:946px;top:111px">Objects</div>
<div class="inp" style="left:941px;top:139px;width:332px;height:26px;border-color:#bcbcbc"></div>
<div class="t" style="left:945px;top:145px;color:#6a6a6a">Search</div>
<div class="btnw" style="left:941px;top:169px;width:27px;height:27px;background:#f7f7f7;border-color:#c4c4c4"></div>
<div class="t" style="left:1033px;top:175px;font-weight:bold;font-size:12.500px">Page 1</div>
<div class="t" style="left:1091px;top:175px">Layer 1</div>
<div class="a" id="tree" style="left:941px;top:200px;width:318px;height:532px;background:#fff;overflow:hidden"></div>
<div class="a" style="left:1259px;top:200px;width:14px;height:532px;background:#ebebeb"></div>
<div class="a" style="left:1259px;top:230px;width:14px;height:68px;background:#cdcdcd"></div>
<div class="t" style="left:1030.5px;top:211.7px">Group of 3 Objects</div>
<div class="t" style="left:1041px;top:248.3px">Curve</div>
<div class="t" style="left:1041px;top:285.0px">Curve</div>
<div class="t" style="left:1041px;top:321.6px">Curve</div>
<div class="t" style="left:1030.5px;top:358.2px">Group of 77 Objects</div>
<div class="t" style="left:1041px;top:394.9px">PowerClip Curve</div>
<div class="t" style="left:1041px;top:431.5px">Curve</div>
<div class="t" style="left:1041px;top:468.1px">Curve</div>
<div class="t" style="left:1041px;top:504.7px">Curve</div>
<div class="t" style="left:1041px;top:541.4px">Curve</div>
<div class="t" style="left:1041px;top:578.0px">Group of 3 Objects</div>
<div class="t" style="left:1041px;top:614.6px">Group of 2 Objects</div>
<div class="t" style="left:1041px;top:651.3px">Group of 8 Objects</div>
<div class="t" style="left:1041px;top:687.9px">Curve</div>
<div class="t" style="left:1041px;top:724.5px">Rectangle</div>
<svg class="a" style="left:0;top:0" width="1322" height="732" viewBox="0 0 1322 732"><defs><clipPath id="treeclip"><rect x="941" y="200" width="318" height="532"/></clipPath></defs><g clip-path="url(#treeclip)"><path d="M959.500 215.7h8l-4 6.500z" fill="#1a1a1a"/>
<use href="#cloud" transform="translate(975 210.500) scale(.136)"/>
<g transform="translate(985 247)" fill="none" stroke="#8fd6d2" stroke-width="1.100"><path d="M2 13c2-1 3-3 5-3.500M7 7c2-1 4-2 6-1.500M9 10c1.500-.5 3-.5 4 0M24 9c.5 2 1.500 3.500 3 4.500M28 9c1 1.500 1 3 .5 5M31 8c-.5 2-1 3-2 4"/></g>
<g transform="translate(985 284) scale(.02675) translate(-40 -50)"><use href="#cl-dark"/></g>
<g transform="translate(985 320.500) scale(.02675) translate(-40 -50)"><use href="#cl-outer" fill="#2d9be0"/></g>
<path d="M959.500 362.2h8l-4 6.500z" fill="#1a1a1a"/>
<g transform="translate(975 357)"><path d="M1 14l5-2 4 1 5-2 5 2 5-2 5 1.500v10h-29z" fill="#1b6fc4"/><path d="M1 18h29v4.500h-29z" fill="#1560ad"/><path d="M3 2l10 12" stroke="#d8c9a0" stroke-width="1"/><path d="M15 8h5v9h-5z" fill="#24356e"/><path d="M16 5h3v4h-3z" fill="#cfd8e6"/><path d="M14 12l7 3" stroke="#fff" stroke-width="1"/></g>
<path d="M970.500 397.4v8.500l6.500-4.250z" fill="#1a1a1a"/>
<g transform="translate(985 391)"><path d="M0 3.700q0-1.600 1.700-1.600h4.300q4.300-2.600 9.800-2.200 5.100.2 9.400 2.200h6.200q1.700 0 1.700 1.600v14.500q0 1.600-1.700 1.600h-6.200q-4.300 2.200-9.400 2.200-5.500 0-9.800-2.200h-4.300q-1.700 0-1.700-1.600z" fill="#25b7c4"/><path d="M1 8c4-3 9-5 14-3-4 2-8 6-10 12l-4 2z" fill="#1560ad"/><path d="M14 4l4 1 2 6-3 5-4-2 1-5z" fill="#28386f"/><ellipse cx="17" cy="17" rx="6" ry="2.500" fill="#d4e04a" transform="rotate(-15 17 17)"/><path d="M22 2c4 0 8 1 9 3v6c-3-2-6-3-9-3z" fill="#7fe0e0"/></g>
<path d="M970.500 434.0v8.500l6.500-4.250z" fill="#1a1a1a"/>
<g transform="translate(985 427)"><path d="M0 3.700q0-1.600 1.700-1.600h4.300q4.300-2.600 9.800-2.200 5.100.2 9.400 2.200h6.200q1.700 0 1.700 1.600v14.500q0 1.600-1.700 1.600h-6.200q-4.300 2.200-9.400 2.200-5.500 0-9.800-2.200h-4.300q-1.700 0-1.700-1.600z" fill="#fff" stroke="#555" stroke-width="1" stroke-dasharray="1.500 1"/></g>
<g transform="translate(985 464)"><path d="M0 3.700q0-1.600 1.700-1.600h4.300q4.300-2.600 9.800-2.200 5.100.2 9.400 2.200h6.200q1.700 0 1.700 1.600v14.500q0 1.600-1.700 1.600h-6.200q-4.300 2.200-9.400 2.200-5.500 0-9.800-2.200h-4.300q-1.700 0-1.700-1.600z" fill="#3fc1b4"/></g>
<g transform="translate(985 501)"><path d="M0 3.700q0-1.600 1.700-1.600h4.300q4.300-2.600 9.800-2.200 5.100.2 9.400 2.200h6.200q1.700 0 1.700 1.600v14.500q0 1.600-1.700 1.600h-6.200q-4.300 2.200-9.400 2.200-5.500 0-9.800-2.200h-4.300q-1.700 0-1.700-1.600z" fill="#0c2a66"/></g>
<g transform="translate(985 538)"><path d="M1.500 1v14q0 4 4 5l8 1.500M18 22h11" fill="none" stroke="#2a3a6a" stroke-width="1.500"/></g>
<path d="M970.500 580.5v8.500l6.500-4.250z" fill="#1a1a1a"/>
<g transform="translate(985 569)"><circle cx="16" cy="16" r="14.500" fill="#fff" stroke="#c4161c" stroke-width="1.800"/><circle cx="16" cy="7.500" r="2.300" fill="#111"/><path d="M13.500 11h5v9h-1.500v7h-1.200v-7h-.6v7h-1.200v-7h-.5z" fill="#111"/><path d="M7 14c5-1 12 3 20 12-7-2-15-5-20-12z" fill="#111"/><path d="M7 15c-1 4 0 9 3 11 2-2 1-6 0-8" fill="none" stroke="#999" stroke-width=".8"/></g>
<path d="M970.500 617.1v8.500l6.500-4.250z" fill="#1a1a1a"/>

<path d="M970.500 653.8v8.500l6.500-4.250z" fill="#1a1a1a"/>
<g transform="translate(992 642)"><rect x="0" y="0" width="19" height="10" fill="#fff" stroke="#17397a" stroke-width="1.200"/><path d="M0 12h19v10q0 7-9.500 9.500-9.500-2.500-9.500-9.500z" fill="#14327a"/><path d="M2 15q3 1 5-1 2.500 2 5 0 2 2 5 1v7q0 5-7.500 7.500-7.500-2.500-7.500-7.500z" fill="#fff"/></g>
<g transform="translate(992 679)"><path d="M0 0l18 3v28l-18-3z" fill="#0f8fe0"/></g>
<g transform="translate(992 716)"><path d="M0 0l18 3v13h-18z" fill="#0c2a66"/></g></g></svg>
<div class="a" style="left:985px;top:606px;width:34px;text-align:center;font-size:6.500px;line-height:7.300px;font-weight:bold;color:#c4161c;letter-spacing:-0.3px;transform:scaleX(.8)">SURF<br>NEVER<br>GOES OUT<br>OF STYLE</div>
<div class="a" style="left:993px;top:643px;width:17px;text-align:center;font-size:5.500px;line-height:8px;font-weight:bold;color:#14327a">WEST</div>
<div class="a" style="left:993px;top:656px;width:17px;text-align:center;font-size:11px;line-height:14px;font-weight:bold;color:#14327a;letter-spacing:-0.5px">82</div>
<div class="a" style="left:940px;top:732px;width:334px;height:29px;background:#ebebeb"></div>
<!-- RIGHT TABS + PALETTE -->
<div class="a" style="left:1273.500px;top:131px;width:1.500px;height:629px;background:#4aa7d8"></div>
<div class="a" style="left:1275px;top:131px;width:23px;height:83px;background:#c9c9c9"></div>
<div class="a" style="left:1275px;top:214px;width:23px;height:110px;background:#c9c9c9;border-top:1px solid #d8d8d8"></div>
<div class="a" style="left:1275px;top:324px;width:23px;height:100px;background:#cfe4f8"></div>
<div class="a" style="left:1275px;top:424px;width:23px;height:336px;background:#e6e6e6"></div>
<div class="t" style="left:1278px;top:160px;writing-mode:vertical-rl;line-height:16px;width:16px">Hints</div>
<div class="t" style="left:1278px;top:244px;writing-mode:vertical-rl;line-height:16px;width:16px">Properties</div>
<div class="t" style="left:1278px;top:356px;writing-mode:vertical-rl;line-height:16px;width:16px">Objects</div>
<div class="a" style="left:1300px;top:178.15px;width:19.500px;height:18.85px;background:#fff;border:1px solid #bdbdbd"></div>
<div class="a" style="left:1300px;top:197.00px;width:19.500px;height:19.15px;background:#000000"></div>
<div class="a" style="left:1300px;top:215.85px;width:19.500px;height:19.15px;background:#1a1a1a"></div>
<div class="a" style="left:1300px;top:234.70px;width:19.500px;height:19.15px;background:#333333"></div>
<div class="a" style="left:1300px;top:253.55px;width:19.500px;height:19.15px;background:#4d4d4d"></div>
<div class="a" style="left:1300px;top:272.40px;width:19.500px;height:19.15px;background:#666666"></div>
<div class="a" style="left:1300px;top:291.25px;width:19.500px;height:19.15px;background:#808080"></div>
<div class="a" style="left:1300px;top:310.10px;width:19.500px;height:19.15px;background:#999999"></div>
<div class="a" style="left:1300px;top:328.95px;width:19.500px;height:19.15px;background:#b3b3b3"></div>
<div class="a" style="left:1300px;top:347.80px;width:19.500px;height:19.15px;background:#cccccc"></div>
<div class="a" style="left:1300px;top:366.65px;width:19.500px;height:19.15px;background:#e6e6e6"></div>
<div class="a" style="left:1300px;top:385.50px;width:19.500px;height:19.15px;background:#ffffff"></div>
<div class="a" style="left:1300px;top:404.35px;width:19.500px;height:19.15px;background:#0000ff"></div>
<div class="a" style="left:1300px;top:423.20px;width:19.500px;height:19.15px;background:#00ffff"></div>
<div class="a" style="left:1300px;top:442.05px;width:19.500px;height:19.15px;background:#00ff00"></div>
<div class="a" style="left:1300px;top:460.90px;width:19.500px;height:19.15px;background:#ffff00"></div>
<div class="a" style="left:1300px;top:479.75px;width:19.500px;height:19.15px;background:#ff0000"></div>
<div class="a" style="left:1300px;top:498.60px;width:19.500px;height:19.15px;background:#ff00ff"></div>
<div class="a" style="left:1300px;top:517.45px;width:19.500px;height:19.15px;background:#9900cc"></div>
<div class="a" style="left:1300px;top:536.30px;width:19.500px;height:19.15px;background:#ff6600"></div>
<div class="a" style="left:1300px;top:555.15px;width:19.500px;height:19.15px;background:#ff99cc"></div>
<div class="a" style="left:1300px;top:574.00px;width:19.500px;height:19.15px;background:#663333"></div>
<div class="a" style="left:1300px;top:592.85px;width:19.500px;height:19.15px;background:#ccccff"></div>
<div class="a" style="left:1300px;top:611.70px;width:19.500px;height:19.15px;background:#9999ff"></div>
<div class="a" style="left:1300px;top:630.55px;width:19.500px;height:19.15px;background:#6699ff"></div>
<div class="a" style="left:1300px;top:649.40px;width:19.500px;height:19.15px;background:#6666ff"></div>
<div class="a" style="left:1300px;top:668.25px;width:19.500px;height:19.15px;background:#6666cc"></div>
<div class="a" style="left:1300px;top:687.10px;width:19.500px;height:19.15px;background:#003399"></div>
<div class="a" style="left:1300px;top:705.95px;width:19.500px;height:6.85px;background:#000080"></div>
<svg class="a" style="left:0;top:0" width="1322" height="800" viewBox="0 0 1322 800">
 <path d="M1301.500 196l17-16.500" stroke="#d8303a" stroke-width="1.300"/>
 <!-- palette top controls -->
 <g fill="#c4c4c4"><rect x="1301" y="106" width="2" height="2"/><rect x="1305" y="106" width="2" height="2"/><rect x="1309" y="106" width="2" height="2"/><rect x="1313" y="106" width="2" height="2"/><rect x="1317" y="106" width="2" height="2"/><rect x="1303" y="109" width="2" height="2"/><rect x="1307" y="109" width="2" height="2"/><rect x="1311" y="109" width="2" height="2"/><rect x="1315" y="109" width="2" height="2"/></g>
 <path d="M1307 121v8.500l5.500-4.250z" fill="#555"/>
 <path d="M1304 156l9-9" stroke="#c2c2c2" stroke-width="3" stroke-linecap="round"/><path d="M1311.500 143.500l4.500 4.500M1314 141.500l3 3" stroke="#c2c2c2" stroke-width="2.600" stroke-linecap="round"/>
 <path d="M1304.500 171.500l5-5 5 5" fill="none" stroke="#cfcfcf" stroke-width="1.600"/>
 <path d="M1303.500 720.500l6 6 6-6" fill="none" stroke="#b8b8b8" stroke-width="1.600"/>
 <path d="M1304.500 738l4.300 4.300-4.300 4.300M1309.500 738l4.300 4.300-4.300 4.300" fill="none" stroke="#b8b8b8" stroke-width="1.400"/>
 <!-- docker header icons -->
 <path d="M1257.500 113.500v9l5.500-4.500zM1263.500 113.500v9l5.500-4.500z" fill="#bdbdbd"/>
 <path d="M1280.500 113.500l9.500 9.500M1290 113.500l-9.500 9.500" stroke="#b5b5b5" stroke-width="1.600"/>
 <!-- hints icon -->
 <path d="M1279 139v11l2.600-2.200 1.800 4 1.700-.8-1.800-3.900h3.300z" fill="#1a1a1a"/>
 <text x="1287.500" y="146" font-family="Liberation Sans, sans-serif" font-size="10.500" fill="#1a1a1a">?</text>
 <!-- properties icon -->
 <path d="M1279.500 228.500l5.500-5.500 5.500 5.500-5.500 5.500z" fill="none" stroke="#1a1a1a" stroke-width="1.400"/><path d="M1282 229.500h6l-3 3z" fill="#c4161c"/>
 <path d="M1291 228v6M1293.500 227v7" stroke="#1a1a1a" stroke-width="1.100"/><path d="M1288.500 233.500l3 3" stroke="#1a1a1a" stroke-width="1.300"/>
 <!-- objects tab icon -->
 <path d="M1279.500 337l7-4 7 4-7 4z" fill="#fff" stroke="#1a1a1a" stroke-width="1.300" stroke-linejoin="round"/>
 <path d="M1279.500 341.500l7 4 7-4" fill="none" stroke="#1a1a1a" stroke-width="1.300" stroke-linejoin="round"/><path d="M1281.500 341.500l5 2.800 5-2.800-5-2.800z" fill="#1a1a1a"/>
 <path d="M1286 431.500v14M1279 438.500h14" stroke="#a4a4a4" stroke-width="2"/>
 <!-- view button icon -->
 <path d="M959.500 181v-6.500h-9.500l-4 4v13.500h6" fill="none" stroke="#1a1a1a" stroke-width="1.500"/><path d="M946 178.500h4v-4" fill="none" stroke="#1a1a1a" stroke-width="1.200"/>
 <path d="M952.500 184.500l6-3.300 6 3.300-6 3.300z" fill="#fff" stroke="#1a1a1a" stroke-width="1.200" stroke-linejoin="round"/><path d="M952.500 188.500l6 3.300 6-3.300-3-1.700-3 1.700-3-1.700z" fill="#1a1a1a" stroke="#1a1a1a" stroke-width="1" stroke-linejoin="round"/>
 <!-- layers icon -->
 <path d="M976 180l9-5.500 9 5.500-9 5.500z" fill="#fff" stroke="#1a1a1a" stroke-width="1.500" stroke-linejoin="round"/>
 <path d="M976 186l4-2.400 5 3 5-3 4 2.400-9 5.500z" fill="#1a1a1a" stroke="#1a1a1a" stroke-width="1.200" stroke-linejoin="round"/>
 <!-- page icon -->
 <path d="M1008 179l5-5h9.500v17.500h-14.500z" fill="#f6f6f6" stroke="#1a1a1a" stroke-width="1.500" stroke-linejoin="round"/><path d="M1008 179h5v-5" fill="none" stroke="#1a1a1a" stroke-width="1.200"/>
 <!-- gear -->
 <g transform="translate(1260 182.500)"><circle r="6" fill="none" stroke="#1a1a1a" stroke-width="3.200"/>
 <g fill="#1a1a1a"><rect x="-2" y="-9.800" width="4" height="4" rx="1"/><rect x="-2" y="5.800" width="4" height="4" rx="1"/><rect x="-9.800" y="-2" width="4" height="4" rx="1"/><rect x="5.800" y="-2" width="4" height="4" rx="1"/>
 <g transform="rotate(45)"><rect x="-2" y="-9.800" width="4" height="4" rx="1"/><rect x="-2" y="5.800" width="4" height="4" rx="1"/><rect x="-9.800" y="-2" width="4" height="4" rx="1"/><rect x="5.800" y="-2" width="4" height="4" rx="1"/></g></g></g>
 <path d="M1272.500 190v4h-4z" fill="#555"/>
 <!-- tree scroll arrows -->
 <path d="M1263 211l3-3 3 3" fill="none" stroke="#333" stroke-width="1.400"/>
 <path d="M1263 720l3 3 3-3" fill="none" stroke="#333" stroke-width="1.400"/>
 <!-- docker bottom toolbar -->
 <path d="M945.500 746.500l8-4.500 8.500 4.500-8.500 5z" fill="#1a1a1a" stroke="#1a1a1a" stroke-width="1.200" stroke-linejoin="round"/>
 <path d="M945.500 742l8-5" fill="none" stroke="#1a1a1a" stroke-width="1.300"/>
 <rect x="955.500" y="736" width="8.500" height="8.500" fill="#0f9438"/><path d="M959.700 737.500v5.500M957 740.250h5.500" stroke="#fff" stroke-width="1.600"/>
 <path d="M977 742l8-5M977 742l8 4 8-4M977 746l8 4 8-4M977 750l8 4 8-4" fill="none" stroke="#1a1a1a" stroke-width="1.200" stroke-linejoin="round"/>
 <rect x="986.500" y="736" width="8.500" height="8.500" fill="#0f9438"/><path d="M990.700 737.500v5.500M988 740.250h5.500" stroke="#fff" stroke-width="1.600"/>
 <text x="1007" y="753" font-family="Liberation Serif, serif" font-style="italic" font-size="15" fill="#bcbcbc">fx</text>
 <rect x="1018.500" y="736.500" width="7.500" height="7.500" fill="#d6d6d6"/><path d="M1022.250 738v4.500M1020 740.250h4.500" stroke="#f4f4f4" stroke-width="1.300"/>
 <path d="M1040.500 742h13v11q0 1.500-1.500 1.500h-10q-1.500 0-1.500-1.500z" fill="#bdbdbd"/><path d="M1039 739.500h16M1044 739.500v-2h6v2" fill="none" stroke="#bdbdbd" stroke-width="1.800"/>
 <path d="M1044.500 744.500v8M1049.500 744.500v8" stroke="#ececec" stroke-width="1.300"/>
 <!-- slider -->
 <path d="M1136 734.500v23M1267.500 734.500v23" stroke="#c9c9c9" stroke-width="1.200"/>
 <path d="M1136 741.500h131.500M1136 749.500h131.500" stroke="#cdcdcd" stroke-width="1.500"/>
 <rect x="1199" y="734.500" width="6.500" height="23.500" fill="#e9e9e9" stroke="#bdbdbd" stroke-width="1"/>
</svg>
<!-- BOTTOM: page nav, doc palette, status bar, scrollbars -->
<div class="a" style="left:919px;top:150px;width:20px;height:567px;background:#fff"></div>
<div class="a" style="left:920px;top:359.500px;width:17.500px;height:152.500px;background:#cdcdcd"></div>
<div class="a" style="left:939px;top:105px;width:1.500px;height:656px;background:#fafafa"></div>
<div class="a" style="left:33px;top:717px;width:906px;height:20px;background:#ebebeb"></div>
<div class="a" style="left:33px;top:717px;width:22px;height:20px;background:#fff"></div>
<div class="a" style="left:513px;top:717px;width:391px;height:19px;background:#fff"></div>
<div class="a" style="left:639px;top:718px;width:129.500px;height:17.500px;background:#cdcdcd"></div>
<svg class="a" style="left:0;top:0" width="1322" height="800" viewBox="0 0 1322 800">
 <path d="M270 717h149l6 20h-149z" fill="#e7e7e7"/>
 <path d="M222 737l6-20h42l6 20z" fill="#fff"/>
 <path d="M276 737l-6-20M326 737l-6-20M375.500 737l-6-20M425 737l-6-20" stroke="#dadada" stroke-width="1"/>
</svg>
<div class="t g" style="left:116px;top:719.500px;font-size:13px;word-spacing:1.500px;color:#b9b9b9">1 of 4</div>
<div class="t" style="left:231.500px;top:719.500px">Page 1</div>
<div class="t" style="left:281.500px;top:719.500px;color:#9a9a9a">Page 2</div>
<div class="t" style="left:331px;top:719.500px;color:#9a9a9a">Page 3</div>
<div class="t" style="left:380.500px;top:719.500px;color:#9a9a9a">Page 4</div>
<div class="a" style="left:33px;top:737px;width:906px;height:24px;background:#ebebeb"></div>
<div class="a" style="left:107.5px;top:738.500px;width:18.4px;height:19px;background:#ffffff;border:1px solid #c4c4c4"></div>
<div class="a" style="left:125.6px;top:738.500px;width:19.2px;height:19px;background:#ffffff;border:1px solid #c4c4c4"></div>
<div class="a" style="left:144.5px;top:738.500px;width:19.3px;height:19px;background:#005066"></div>
<div class="a" style="left:163.5px;top:738.500px;width:19.3px;height:19px;background:#0a3a1a"></div>
<div class="a" style="left:182.5px;top:738.500px;width:19.1px;height:19px;background:#3c0808"></div>
<div class="a" style="left:201.3px;top:738.500px;width:19.5px;height:19px;background:#e6e6e6;border:1px solid #c4c4c4"></div>
<div class="a" style="left:220.5px;top:738.500px;width:18.6px;height:19px;background:#dcdcdc;border:1px solid #c4c4c4"></div>
<div class="a" style="left:238.8px;top:738.500px;width:19.0px;height:19px;background:#00ccff"></div>
<div class="a" style="left:257.5px;top:738.500px;width:19.1px;height:19px;background:#3a3a3a"></div>
<div class="a" style="left:1px;top:760px;width:1320px;height:38px;background:#ebebeb;border-top:1px solid #dcdcdc"></div>
<div class="t" style="left:37.500px;top:773px;word-spacing:-0.5px">( 7,799 ; 4,866&nbsp; )</div>
<div class="btnw" style="left:830px;top:768px;width:24.500px;height:23.500px;border-color:#c8c8c8"></div>
<div class="t" style="left:858.500px;top:772.700px">None</div>
<div class="a" style="left:1058.500px;top:768px;width:23.500px;height:23px;background:#005066"></div>
<div class="t" style="left:1086.500px;top:773px">R0 G80 B102 (#005066)&nbsp; 0,500 pt</div>
<svg class="a" style="left:0;top:0" width="1322" height="800" viewBox="0 0 1322 800">
 <!-- page tab shapes -->
 <!-- nav icons -->
 <g fill="none" stroke="#1a1a1a" stroke-width="1.200"><path d="M59 724.500l3-3h5.500v10h-8.500zM59 724.500h3v-3"/><path d="M63.250 724.500v5M60.750 727h5"/></g>
 <g fill="none" stroke="#1a1a1a" stroke-width="1.200"><path d="M198.500 724.500l3-3h5.500v10h-8.500zM198.500 724.500h3v-3"/><path d="M202.750 724.500v5M200.250 727h5"/></g>
 <path d="M77.500 721.500v10" stroke="#c4c4c4" stroke-width="1.500"/><path d="M88 721.500v10l-8-5z" fill="#c4c4c4"/>
 <path d="M106 721.500v10l-8-5z" fill="#c4c4c4"/>
 <path d="M160.500 721.500v10l8-5z" fill="#1a1a1a"/>
 <path d="M179 721.500v10l8-5z" fill="#1a1a1a"/><path d="M189 721.500v10" stroke="#1a1a1a" stroke-width="1.600"/>
 <!-- grip dots -->
 <g fill="#c9c9c9"><rect x="489" y="720" width="2" height="2"/><rect x="493" y="720" width="2" height="2"/><rect x="491" y="723" width="2" height="2"/><rect x="489" y="726" width="2" height="2"/><rect x="493" y="726" width="2" height="2"/><rect x="491" y="729" width="2" height="2"/><rect x="489" y="732" width="2" height="2"/><rect x="493" y="732" width="2" height="2"/>
 <rect x="37" y="741" width="2" height="2"/><rect x="41" y="741" width="2" height="2"/><rect x="39" y="744" width="2" height="2"/><rect x="37" y="747" width="2" height="2"/><rect x="41" y="747" width="2" height="2"/><rect x="39" y="750" width="2" height="2"/><rect x="37" y="753" width="2" height="2"/><rect x="41" y="753" width="2" height="2"/></g>
 <!-- scroll arrows -->
 <path d="M507.500 723.500l-3 3 3 3" fill="none" stroke="#333" stroke-width="1.400"/>
 <path d="M909.500 723.500l3 3-3 3" fill="none" stroke="#333" stroke-width="1.400"/>
 <path d="M926.500 157.500l3-3 3 3" fill="none" stroke="#333" stroke-width="1.400"/>
 <path d="M926.500 708l3 3 3-3" fill="none" stroke="#333" stroke-width="1.400"/>
 <!-- zoom nav icon -->
 <circle cx="927" cy="725.500" r="5" fill="#fff" stroke="#1a1a1a" stroke-width="1.300"/><path d="M930.700 729.500l4.300 4" stroke="#1a1a1a" stroke-width="1.800"/>
 <g fill="#1a1a1a"><rect x="926.200" y="722" width="1.600" height="1.600"/><rect x="926.200" y="727.400" width="1.600" height="1.600"/><rect x="923.500" y="724.700" width="1.600" height="1.600"/><rect x="928.900" y="724.700" width="1.600" height="1.600"/></g>
 <!-- doc palette controls -->
 <path d="M51.500 744.500v7l4.500-3.500z" fill="#555"/>
 <path d="M70 754l9-9" stroke="#1a1a1a" stroke-width="3" stroke-linecap="round"/><path d="M70.200 753.800l6-6" stroke="#e8902a" stroke-width="1.300" stroke-linecap="round"/><path d="M77.500 742.500l4.500 4.500M80 740.500l3.500 3.500" stroke="#1a1a1a" stroke-width="2.600" stroke-linecap="round"/>
 <path d="M99.500 743.500l-4.500 4.700 4.500 4.700" fill="none" stroke="#cfcfcf" stroke-width="1.600"/>
 <path d="M109.500 756l14.500-15.500" stroke="#d8303a" stroke-width="1.300"/>
 <path d="M898 743.500l5.500 4.700-5.500 4.700" fill="none" stroke="#d0d0d0" stroke-width="1.800"/>
 <path d="M916 744.500l3.800 3.700-3.800 3.700M921 744.500l3.800 3.700-3.800 3.700" fill="none" stroke="#b4b4b4" stroke-width="1.300"/>
 <!-- status gear -->
 <g transform="translate(18.500 779)"><circle r="6.300" fill="none" stroke="#1a1a1a" stroke-width="3.300"/>
 <g fill="#1a1a1a"><rect x="-2.100" y="-10.300" width="4.200" height="4.200" rx="1"/><rect x="-2.100" y="6.100" width="4.200" height="4.200" rx="1"/><rect x="-10.300" y="-2.100" width="4.200" height="4.200" rx="1"/><rect x="6.100" y="-2.100" width="4.200" height="4.200" rx="1"/>
 <g transform="rotate(45)"><rect x="-2.100" y="-10.300" width="4.200" height="4.200" rx="1"/><rect x="-2.100" y="6.100" width="4.200" height="4.200" rx="1"/><rect x="-10.300" y="-2.100" width="4.200" height="4.200" rx="1"/><rect x="6.100" y="-2.100" width="4.200" height="4.200" rx="1"/></g></g></g>
 <path d="M31.500 788v4h-4z" fill="#555"/>
 <!-- fill status icon -->
 <path d="M809 780l9-9 9 9-9 9z" fill="#fff" stroke="#1a1a1a" stroke-width="1.800"/><path d="M813 781.500h10l-5 4.500z" fill="#e0232e"/><path d="M815.500 772l6 6" stroke="#1a1a1a" stroke-width="2.600"/>
 <path d="M828.500 783v7.500h-6z" fill="#e0232e"/>
 <path d="M831.500 790l21.500-21" stroke="#d8232e" stroke-width="1.500"/>
 <!-- pen nib -->
 <path d="M1047 769.500l-3.800 9 1.800 6h4l1.800-6z" fill="#fff" stroke="#1a1a1a" stroke-width="1.300" stroke-linejoin="round"/><path d="M1047 770.500v7.500" stroke="#1a1a1a" stroke-width="1"/><circle cx="1047" cy="779" r="1.200" fill="#1a1a1a"/><rect x="1044" y="785.500" width="6" height="3.500" fill="#fff" stroke="#1a1a1a" stroke-width="1.200"/>
</svg>
<!-- window border -->
<div class="a" style="left:0;top:0;width:1322px;height:1px;background:#6a6a6a"></div>
<div class="a" style="left:0;top:0;width:1px;height:800px;background:#5a5a5a"></div>
<div class="a" style="left:1321px;top:0;width:1px;height:800px;background:#6a6a6a"></div>
<div class="a" style="left:0;top:798px;width:1322px;height:2px;background:#5e5e5e"></div>
</body>
</html>
